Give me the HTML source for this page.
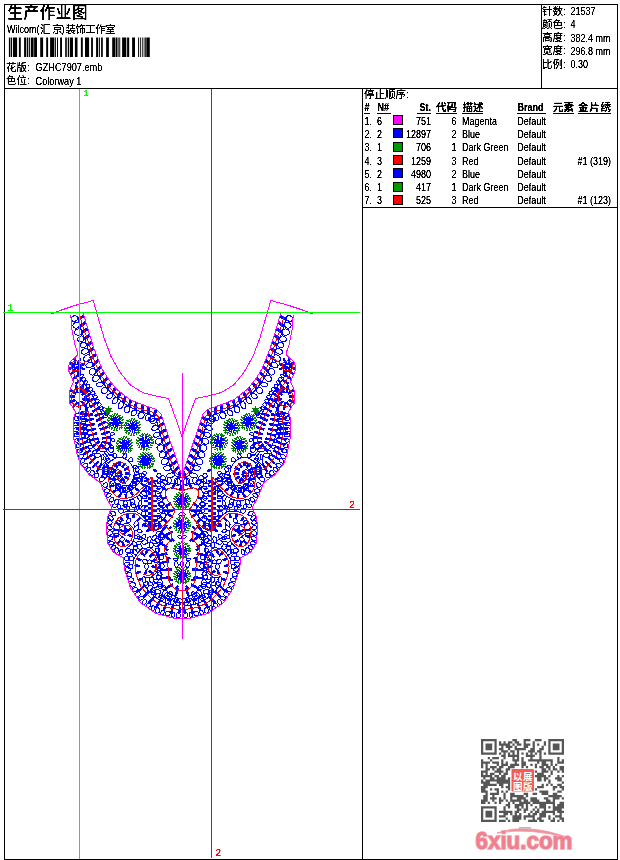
<!DOCTYPE html>
<html lang="zh"><head><meta charset="utf-8"><title>生产作业图</title>
<style>
html,body{margin:0;padding:0;background:#fff}
body{width:620px;height:860px;overflow:hidden}
svg{display:block}
text{font-family:"Liberation Sans","Noto Sans CJK SC",sans-serif;fill:#000}
.l{font-size:10px}
.c{font-size:10.5px;font-family:"Liberation Sans","Noto Sans CJK SC",sans-serif}
.hb{font-size:10px;font-weight:bold}
.hc{font-size:10.5px;font-weight:bold;font-family:"Liberation Sans","Noto Sans CJK SC",sans-serif}
.t{font-size:15.5px;font-weight:500;letter-spacing:0.6px;font-family:"Liberation Sans","Noto Sans CJK SC",sans-serif}
.g{font-size:10px;font-family:"Liberation Mono",monospace}
</style></head><body>
<svg width="620" height="860" viewBox="0 0 620 860">
<defs><filter id="th" x="0" y="0" width="100%" height="100%" filterUnits="userSpaceOnUse" color-interpolation-filters="sRGB"><feComponentTransfer><feFuncA type="linear" slope="3" intercept="-0.55"/></feComponentTransfer></filter></defs>
<rect width="620" height="860" fill="#fff"/>
<g shape-rendering="crispEdges" fill="none" stroke="#000" stroke-width="1">
<rect x="4.5" y="4.5" width="613" height="855"/>
<path d="M4 88.5H618 M362.5 88V859 M541.5 4V88 M362 207.5H618"/>
</g>
<path d="M8.9 37.5h1.5v19.5h-1.5zM11.0 37.5h1.1v19.5h-1.1zM13.0 37.5h4.1v19.5h-4.1zM18.9 37.5h1.9v19.5h-1.9zM24.1 37.5h2.0v19.5h-2.0zM26.8 37.5h1.5v19.5h-1.5zM29.1 37.5h1.1v19.5h-1.1zM31.0 37.5h2.6v19.5h-2.6zM34.1 37.5h2.9v19.5h-2.9zM40.2 37.5h2.9v19.5h-2.9zM46.2 37.5h1.9v19.5h-1.9zM50.1 37.5h4.3v19.5h-4.3zM55.1 37.5h0.9v19.5h-0.9zM57.0 37.5h1.0v19.5h-1.0zM60.1 37.5h1.9v19.5h-1.9zM65.2 37.5h1.6v19.5h-1.6zM67.8 37.5h1.3v19.5h-1.3zM69.9 37.5h3.1v19.5h-3.1zM74.9 37.5h2.6v19.5h-2.6zM80.9 37.5h1.9v19.5h-1.9zM85.0 37.5h4.1v19.5h-4.1zM91.1 37.5h1.8v19.5h-1.8zM96.1 37.5h1.9v19.5h-1.9zM98.8 37.5h1.1v19.5h-1.1zM101.1 37.5h1.7v19.5h-1.7zM106.1 37.5h2.8v19.5h-2.8zM112.2 37.5h3.2v19.5h-3.2zM115.9 37.5h1.3v19.5h-1.3zM117.7 37.5h0.9v19.5h-0.9zM119.3 37.5h0.9v19.5h-0.9zM122.1 37.5h4.2v19.5h-4.2zM127.1 37.5h2.1v19.5h-2.1zM132.1 37.5h2.9v19.5h-2.9zM138.1 37.5h0.9v19.5h-0.9zM139.9 37.5h0.9v19.5h-0.9zM141.9 37.5h0.8v19.5h-0.8zM143.7 37.5h0.8v19.5h-0.8zM145.0 37.5h0.8v19.5h-0.8zM146.3 37.5h3.5v19.5h-3.5z" fill="#000"/>
<g filter="url(#th)">
<text class="t" x="7.5" y="18">生产作业图</text>
<text class="l" transform="translate(7 33) scale(0.9 1)">Wilcom(</text>
<text class="c" x="40" y="32.5">汇</text><text class="c" x="52" y="32.5">京</text>
<text class="l" transform="translate(61.5 33) scale(0.9 1)">)</text>
<text class="c" x="65.5" y="32.5" textLength="50">装饰工作室</text>
<text class="c" x="6" y="70.5">花版:</text>
<text class="l" transform="translate(35.5 71) scale(0.92 1)">GZHC7907.emb</text>
<text class="c" x="6" y="84">色位:</text>
<text class="l" transform="translate(35.5 84.5) scale(0.92 1)">Colorway 1</text>
<text class="c" x="542.0" y="14.5" >针数:</text>
<text class="l" transform="translate(570.5 15.0) scale(0.90 1)" text-anchor="start">21537</text>
<text class="c" x="542.0" y="27.8" >颜色:</text>
<text class="l" transform="translate(570.5 28.2) scale(0.90 1)" text-anchor="start">4</text>
<text class="c" x="542.0" y="41.0" >高度:</text>
<text class="l" transform="translate(570.5 41.5) scale(0.90 1)" text-anchor="start">382.4 mm</text>
<text class="c" x="542.0" y="54.2" >宽度:</text>
<text class="l" transform="translate(570.5 54.8) scale(0.90 1)" text-anchor="start">296.8 mm</text>
<text class="c" x="542.0" y="67.5" >比例:</text>
<text class="l" transform="translate(570.5 68.0) scale(0.90 1)" text-anchor="start">0.30</text>
<text class="c" x="364" y="98">停止顺序:</text>
<g>
<text class="hb" transform="translate(364.5 110.8) scale(0.9 1)">#</text>
<text class="hb" transform="translate(377.5 110.8) scale(0.9 1)">N#</text>
<text class="hb" transform="translate(431 110.8) scale(0.9 1)" text-anchor="end">St.</text>
<text class="hc" x="436" y="110.5">代码</text>
<text class="hc" x="462.5" y="110.5">描述</text>
<text class="hb" transform="translate(517.5 110.8) scale(0.9 1)">Brand</text>
<text class="hc" x="553" y="110.5">元素</text>
<text class="hc" x="578" y="110.5" textLength="33">金片绣</text>
<path d="M364 113.5h6 M377 113.5h14 M417 113.5h14 M436 113.5h21 M462 113.5h21 M517 113.5h29 M553 113.5h21 M578 113.5h33" stroke="#000" stroke-width="1" shape-rendering="crispEdges"/>
</g>
<text class="l" transform="translate(364.5 124.8) scale(0.90 1)" text-anchor="start">1.</text>
<text class="l" transform="translate(377.0 124.8) scale(0.90 1)" text-anchor="start">6</text>
<rect x="393.5" y="115.5" width="9" height="9" fill="#f0f" stroke="#000" stroke-width="1"/>
<text class="l" transform="translate(431.0 124.8) scale(0.90 1)" text-anchor="end">751</text>
<text class="l" transform="translate(456.5 124.8) scale(0.90 1)" text-anchor="end">6</text>
<text class="l" transform="translate(462.0 124.8) scale(0.90 1)" text-anchor="start">Magenta</text>
<text class="l" transform="translate(517.2 124.8) scale(0.90 1)" text-anchor="start">Default</text>
<text class="l" transform="translate(364.5 138.0) scale(0.90 1)" text-anchor="start">2.</text>
<text class="l" transform="translate(377.0 138.0) scale(0.90 1)" text-anchor="start">2</text>
<rect x="393.5" y="128.5" width="9" height="9" fill="#00f" stroke="#000" stroke-width="1"/>
<text class="l" transform="translate(431.0 138.0) scale(0.90 1)" text-anchor="end">12897</text>
<text class="l" transform="translate(456.5 138.0) scale(0.90 1)" text-anchor="end">2</text>
<text class="l" transform="translate(462.0 138.0) scale(0.90 1)" text-anchor="start">Blue</text>
<text class="l" transform="translate(517.2 138.0) scale(0.90 1)" text-anchor="start">Default</text>
<text class="l" transform="translate(364.5 151.2) scale(0.90 1)" text-anchor="start">3.</text>
<text class="l" transform="translate(377.0 151.2) scale(0.90 1)" text-anchor="start">1</text>
<rect x="393.5" y="142.5" width="9" height="9" fill="#009900" stroke="#000" stroke-width="1"/>
<text class="l" transform="translate(431.0 151.2) scale(0.90 1)" text-anchor="end">706</text>
<text class="l" transform="translate(456.5 151.2) scale(0.90 1)" text-anchor="end">1</text>
<text class="l" transform="translate(462.0 151.2) scale(0.90 1)" text-anchor="start">Dark Green</text>
<text class="l" transform="translate(517.2 151.2) scale(0.90 1)" text-anchor="start">Default</text>
<text class="l" transform="translate(364.5 164.5) scale(0.90 1)" text-anchor="start">4.</text>
<text class="l" transform="translate(377.0 164.5) scale(0.90 1)" text-anchor="start">3</text>
<rect x="393.5" y="155.5" width="9" height="9" fill="#f00" stroke="#000" stroke-width="1"/>
<text class="l" transform="translate(431.0 164.5) scale(0.90 1)" text-anchor="end">1259</text>
<text class="l" transform="translate(456.5 164.5) scale(0.90 1)" text-anchor="end">3</text>
<text class="l" transform="translate(462.0 164.5) scale(0.90 1)" text-anchor="start">Red</text>
<text class="l" transform="translate(517.2 164.5) scale(0.90 1)" text-anchor="start">Default</text>
<text class="l" transform="translate(611.0 164.5) scale(0.90 1)" text-anchor="end">#1 (319)</text>
<text class="l" transform="translate(364.5 177.7) scale(0.90 1)" text-anchor="start">5.</text>
<text class="l" transform="translate(377.0 177.7) scale(0.90 1)" text-anchor="start">2</text>
<rect x="393.5" y="168.5" width="9" height="9" fill="#00f" stroke="#000" stroke-width="1"/>
<text class="l" transform="translate(431.0 177.7) scale(0.90 1)" text-anchor="end">4980</text>
<text class="l" transform="translate(456.5 177.7) scale(0.90 1)" text-anchor="end">2</text>
<text class="l" transform="translate(462.0 177.7) scale(0.90 1)" text-anchor="start">Blue</text>
<text class="l" transform="translate(517.2 177.7) scale(0.90 1)" text-anchor="start">Default</text>
<text class="l" transform="translate(364.5 190.9) scale(0.90 1)" text-anchor="start">6.</text>
<text class="l" transform="translate(377.0 190.9) scale(0.90 1)" text-anchor="start">1</text>
<rect x="393.5" y="182.5" width="9" height="9" fill="#009900" stroke="#000" stroke-width="1"/>
<text class="l" transform="translate(431.0 190.9) scale(0.90 1)" text-anchor="end">417</text>
<text class="l" transform="translate(456.5 190.9) scale(0.90 1)" text-anchor="end">1</text>
<text class="l" transform="translate(462.0 190.9) scale(0.90 1)" text-anchor="start">Dark Green</text>
<text class="l" transform="translate(517.2 190.9) scale(0.90 1)" text-anchor="start">Default</text>
<text class="l" transform="translate(364.5 204.1) scale(0.90 1)" text-anchor="start">7.</text>
<text class="l" transform="translate(377.0 204.1) scale(0.90 1)" text-anchor="start">3</text>
<rect x="393.5" y="195.5" width="9" height="9" fill="#f00" stroke="#000" stroke-width="1"/>
<text class="l" transform="translate(431.0 204.1) scale(0.90 1)" text-anchor="end">525</text>
<text class="l" transform="translate(456.5 204.1) scale(0.90 1)" text-anchor="end">3</text>
<text class="l" transform="translate(462.0 204.1) scale(0.90 1)" text-anchor="start">Red</text>
<text class="l" transform="translate(517.2 204.1) scale(0.90 1)" text-anchor="start">Default</text>
<text class="l" transform="translate(611.0 204.1) scale(0.90 1)" text-anchor="end">#1 (123)</text>
</g>
<g id="design" shape-rendering="crispEdges">
<g id="half">
<clipPath id="sil"><path d="M70.7 314.6 L72.0 330.0 L75.0 345.0 L77.5 352.0 L77.0 355.6 L69.6 362.4 L68.5 367.0 L69.0 371.4 L73.5 381.6 L69.6 390.6 L69.0 397.0 L69.6 403.0 L72.4 406.8 L75.8 412.4 L73.5 418.0 L73.5 437.0 L77.0 454.0 L80.2 463.5 L89.2 474.8 L100.5 482.7 L105.0 495.1 L111.8 507.6 L107.6 517.0 L106.3 528.0 L107.9 543.4 L113.5 552.4 L123.1 557.5 L124.5 569.0 L130.5 588.0 L140.8 603.0 L156.3 613.5 L173.0 618.0 L182.0 618.5 L182.0 474.3 L181.5 474.3 L165.0 426.0 L161.0 414.0 L156.6 409.5 L142.0 404.5 L129.7 399.5 L116.6 389.3 L109.0 380.0 L102.0 369.0 L94.0 348.7 L91.2 340.0 L87.0 326.0 L83.1 313.0Z"/></clipPath>
<g clip-path="url(#sil)">
<path d="M75.2 321.2 L72.9 321.3 L71.3 320.4 L70.8 318.7 L71.8 317.0 L73.8 315.9 L76.0 315.8 L77.7 316.8 L78.2 318.4 L77.2 320.1Z M77.8 317.7 L79.7 317.1 M77.6 327.8 L75.4 328.3 L73.6 327.5 L72.8 325.9 L73.4 324.1 L75.1 322.6 L77.2 322.2 L79.0 322.9 L79.8 324.5 L79.3 326.4Z M79.6 324.3 L81.5 323.8 M78.6 335.4 L76.2 334.9 L74.6 333.4 L74.5 331.4 L75.9 329.7 L78.2 328.9 L80.6 329.4 L82.2 330.9 L82.3 332.9 L80.9 334.6Z M81.6 331.1 L83.5 330.4 M82.6 341.3 L80.6 342.0 L78.7 341.5 L77.7 340.0 L77.9 338.1 L79.3 336.5 L81.3 335.8 L83.2 336.3 L84.2 337.8 L84.0 339.7Z M84.1 337.6 L86.0 336.9 M83.4 347.5 L81.4 347.2 L80.1 346.1 L80.0 344.5 L81.0 343.2 L82.9 342.5 L84.9 342.8 L86.2 343.9 L86.3 345.5 L85.3 346.8Z M86.4 344.0 L88.3 343.3 M85.9 353.9 L83.6 354.2 L81.8 353.5 L81.2 352.0 L82.1 350.3 L84.1 349.0 L86.4 348.6 L88.2 349.3 L88.8 350.8 L87.9 352.6Z M88.3 350.5 L90.2 350.0 M89.2 360.7 L87.1 361.8 L85.0 361.5 L83.6 360.1 L83.7 357.9 L85.0 355.9 L87.1 354.8 L89.3 355.1 L90.6 356.6 L90.6 358.7Z M90.3 357.2 L92.2 356.6 M90.5 367.3 L88.2 367.8 L86.3 367.2 L85.8 365.8 L86.6 364.2 L88.6 362.8 L91.0 362.3 L92.8 362.9 L93.4 364.3 L92.5 366.0Z M92.7 363.8 L94.6 363.1 M94.7 374.0 L92.8 375.1 L90.8 374.9 L89.4 373.5 L89.1 371.4 L90.2 369.5 L92.1 368.4 L94.2 368.7 L95.6 370.1 L95.8 372.1Z M95.5 370.3 L97.3 369.5 M97.8 380.5 L95.8 381.5 L93.8 381.4 L92.6 380.0 L92.7 378.0 L94.1 376.1 L96.2 375.1 L98.2 375.2 L99.4 376.5 L99.2 378.6Z M98.9 376.6 L100.6 375.6 M100.4 386.7 L98.2 386.8 L96.7 385.9 L96.4 384.5 L97.4 383.1 L99.3 382.3 L101.4 382.2 L102.9 383.1 L103.3 384.4 L102.3 385.9Z M102.7 382.6 L104.3 381.5 M106.7 392.4 L105.1 393.5 L103.2 393.6 L101.7 392.4 L101.3 390.6 L102.0 388.7 L103.7 387.5 L105.6 387.5 L107.1 388.6 L107.5 390.5Z M107.0 388.3 L108.5 387.0 M111.1 397.9 L109.3 398.6 L107.6 398.4 L106.8 397.2 L107.2 395.6 L108.5 394.1 L110.3 393.4 L112.0 393.6 L112.8 394.8 L112.5 396.4Z M112.1 393.5 L113.4 392.0 M117.1 402.1 L115.4 403.5 L113.6 403.9 L112.4 403.0 L112.3 401.2 L113.3 399.2 L115.0 397.7 L116.8 397.4 L117.9 398.3 L118.0 400.1Z M117.4 398.0 L118.7 396.5 M123.0 406.0 L121.8 407.9 L120.2 408.8 L118.8 408.3 L118.1 406.6 L118.5 404.3 L119.7 402.3 L121.4 401.4 L122.7 402.0 L123.4 403.7Z M122.8 402.4 L124.0 400.8 M129.7 410.7 L128.3 412.2 L126.5 412.7 L124.9 411.9 L124.1 410.2 L124.5 408.2 L125.9 406.7 L127.7 406.2 L129.3 407.0 L130.0 408.7Z M128.8 406.5 L129.8 404.8 M135.6 414.6 L133.9 415.7 L132.1 415.7 L131.1 414.7 L131.1 412.9 L132.2 411.2 L133.9 410.1 L135.7 410.0 L136.8 411.1 L136.7 412.8Z M135.2 409.8 L136.0 407.9 M143.6 417.1 L142.0 418.5 L140.1 418.7 L138.5 417.7 L137.9 415.8 L138.6 413.8 L140.2 412.4 L142.2 412.2 L143.7 413.2 L144.3 415.1Z M142.1 412.2 L142.6 410.3 M150.2 418.4 L148.8 420.0 L147.1 420.5 L145.8 419.8 L145.4 418.1 L146.0 416.0 L147.4 414.4 L149.1 413.9 L150.4 414.6 L150.8 416.3Z M148.9 413.9 L149.3 412.0 M153.1 421.4 L151.1 421.9 L149.4 421.2 L148.5 419.6 L148.9 417.8 L150.4 416.4 L152.3 415.9 L154.1 416.6 L154.9 418.2 L154.6 420.0Z M153.9 416.3 L155.1 414.7 M153.4 423.6 L151.4 423.1 L150.1 422.0 L150.0 420.5 L151.3 419.2 L153.3 418.7 L155.3 419.1 L156.6 420.3 L156.6 421.8 L155.4 423.0Z M156.6 420.3 L158.6 419.8 M156.4 430.0 L154.5 430.7 L152.7 430.4 L151.8 429.1 L152.2 427.3 L153.6 425.8 L155.6 425.0 L157.3 425.4 L158.2 426.7 L157.9 428.4Z M158.3 427.0 L160.3 426.5 M157.9 436.7 L155.7 437.3 L154.0 436.9 L153.3 435.6 L154.0 434.0 L155.8 432.6 L157.9 432.0 L159.7 432.4 L160.3 433.7 L159.6 435.3Z M160.1 433.7 L162.0 433.2 M159.5 444.0 L157.3 444.1 L155.7 443.2 L155.2 441.5 L156.0 439.8 L157.8 438.6 L159.9 438.5 L161.6 439.5 L162.1 441.1 L161.3 442.9Z M161.9 440.4 L163.8 439.9 M161.2 451.1 L159.0 451.0 L157.4 449.7 L156.9 447.8 L157.9 446.0 L159.8 444.9 L162.1 445.0 L163.7 446.3 L164.1 448.2 L163.2 450.1Z M163.8 447.1 L165.7 446.5 M164.3 457.4 L162.3 458.0 L160.5 457.4 L159.4 455.8 L159.6 453.8 L160.9 452.2 L162.9 451.6 L164.7 452.2 L165.8 453.8 L165.6 455.8Z M165.8 453.8 L167.7 453.1 M166.5 464.2 L164.2 464.9 L162.1 464.3 L161.1 462.6 L161.6 460.5 L163.2 458.8 L165.5 458.1 L167.5 458.7 L168.5 460.4 L168.1 462.5Z M168.1 460.4 L169.9 459.7 M167.3 470.5 L165.0 470.1 L163.6 468.9 L163.6 467.4 L165.0 466.2 L167.2 465.7 L169.5 466.1 L170.9 467.3 L170.9 468.8 L169.5 470.0Z M170.4 466.9 L172.3 466.2 M171.1 477.7 L168.7 477.9 L167.0 477.0 L166.6 475.6 L167.7 474.1 L169.9 473.1 L172.3 472.9 L174.1 473.8 L174.4 475.2 L173.3 476.7Z M173.4 473.6 L175.1 472.6 M180.7 482.6 L179.8 484.6 L178.2 485.7 L176.5 485.4 L175.3 483.8 L175.1 481.7 L176.0 479.7 L177.6 478.6 L179.4 478.9 L180.5 480.4Z M179.5 479.1 L180.4 477.4 M77.8 317.7 L79.6 324.3 L81.6 331.1 L84.1 337.6 L86.4 344.0 L88.3 350.5 L90.3 357.2 L92.7 363.8 L95.5 370.3 L98.9 376.6 L102.7 382.6 L107.0 388.3 L112.1 393.5 L117.4 398.0 L122.8 402.4 L128.8 406.5 L135.2 409.8 L142.1 412.2 L148.9 413.9 L153.9 416.3 L156.6 420.3 L158.3 427.0 L160.1 433.7 L161.9 440.4 L163.8 447.1 L165.8 453.8 L168.1 460.4 L170.4 466.9 L173.4 473.6 L179.5 479.1 M77.9 370.3 L76.6 370.4 L75.6 369.8 L75.2 368.8 L75.6 367.7 L76.6 366.9 L77.9 366.8 L78.9 367.3 L79.3 368.4 L78.9 369.5Z M80.6 373.2 L79.7 373.9 L78.6 373.9 L77.9 373.3 L77.7 372.3 L78.1 371.3 L79.1 370.6 L80.1 370.6 L80.9 371.2 L81.0 372.2Z M81.9 377.0 L80.6 377.2 L79.6 377.0 L79.3 376.2 L79.9 375.4 L81.0 374.7 L82.3 374.4 L83.3 374.7 L83.6 375.4 L83.0 376.3Z M84.3 380.9 L83.2 381.1 L82.2 380.6 L81.8 379.6 L82.0 378.5 L82.8 377.7 L83.9 377.5 L84.9 378.1 L85.4 379.1 L85.2 380.1Z M86.8 383.6 L85.6 384.3 L84.6 384.3 L83.9 383.6 L84.0 382.5 L84.7 381.5 L85.8 380.8 L86.9 380.8 L87.5 381.5 L87.5 382.6Z M89.1 387.4 L88.0 387.8 L87.0 387.4 L86.4 386.4 L86.4 385.3 L87.1 384.4 L88.2 384.1 L89.3 384.5 L89.9 385.4 L89.8 386.6Z M91.3 391.0 L89.9 391.2 L88.9 390.8 L88.5 389.8 L88.9 388.8 L89.9 388.0 L91.3 387.7 L92.3 388.2 L92.8 389.1 L92.3 390.2Z M93.4 394.9 L92.0 394.9 L91.1 394.2 L90.9 393.2 L91.5 392.3 L92.7 391.7 L94.0 391.7 L94.9 392.4 L95.2 393.3 L94.6 394.3Z M95.5 398.5 L94.2 398.5 L93.3 397.9 L93.1 397.0 L93.8 396.2 L94.9 395.7 L96.2 395.7 L97.1 396.3 L97.3 397.2 L96.7 398.0Z M97.7 402.5 L96.5 402.5 L95.5 401.9 L95.3 400.8 L95.7 399.8 L96.8 399.2 L98.0 399.2 L98.9 399.8 L99.2 400.9 L98.7 401.9Z M99.9 406.2 L98.6 406.3 L97.6 405.8 L97.2 404.8 L97.6 403.8 L98.6 403.0 L99.9 402.8 L100.9 403.4 L101.3 404.3 L100.9 405.4Z M101.8 409.7 L100.5 409.9 L99.6 409.5 L99.2 408.7 L99.6 407.7 L100.7 407.0 L101.9 406.8 L102.9 407.2 L103.2 408.0 L102.8 409.0Z M103.3 413.4 L102.0 413.2 L101.2 412.7 L101.1 411.9 L101.8 411.2 L103.0 410.8 L104.3 411.0 L105.1 411.5 L105.2 412.3 L104.5 413.0Z M75.6 369.6 L77.7 373.2 L79.8 376.8 L82.0 380.3 L84.2 383.6 L86.6 387.0 L89.0 390.5 L91.4 394.3 L93.5 398.0 L95.6 401.7 L97.6 405.5 L99.5 409.2 L101.5 413.0 M106.8 417.0 L105.5 417.4 L104.3 417.2 L103.7 416.3 L104.0 415.2 L105.0 414.2 L106.4 413.7 L107.5 413.9 L108.1 414.8 L107.8 416.0Z M112.4 435.2 L111.1 435.1 L110.3 434.5 L110.3 433.7 L111.0 433.0 L112.2 432.6 L113.4 432.8 L114.2 433.4 L114.2 434.2 L113.5 434.9Z M112.5 441.4 L111.5 440.7 L111.0 439.8 L111.3 439.0 L112.3 438.5 L113.5 438.7 L114.5 439.4 L114.9 440.3 L114.6 441.1 L113.7 441.5Z M110.5 448.1 L109.7 447.0 L109.7 445.9 L110.4 445.1 L111.5 445.0 L112.7 445.5 L113.4 446.6 L113.4 447.7 L112.8 448.5 L111.6 448.7Z M105.8 454.6 L105.0 453.5 L104.8 452.4 L105.5 451.7 L106.6 451.7 L107.7 452.3 L108.5 453.4 L108.6 454.5 L108.0 455.2 L106.9 455.2Z M94.0 450.7 L95.3 450.2 L96.4 450.4 L96.9 451.3 L96.6 452.4 L95.6 453.3 L94.3 453.8 L93.2 453.5 L92.7 452.7 L93.0 451.6Z M89.7 445.5 L90.9 445.2 L92.0 445.6 L92.6 446.6 L92.4 447.8 L91.5 448.7 L90.2 449.0 L89.1 448.6 L88.6 447.6 L88.8 446.5Z M87.4 440.0 L88.6 439.9 L89.5 440.4 L89.8 441.3 L89.4 442.2 L88.4 442.8 L87.2 442.9 L86.3 442.5 L86.0 441.6 L86.4 440.7Z M86.3 434.7 L87.7 435.0 L88.6 435.8 L88.7 436.9 L87.9 437.9 L86.6 438.3 L85.2 438.1 L84.3 437.2 L84.2 436.1 L85.0 435.2Z M84.5 430.2 L85.7 429.9 L86.8 430.4 L87.4 431.5 L87.1 432.6 L86.2 433.5 L85.0 433.7 L83.9 433.2 L83.4 432.2 L83.6 431.0Z M83.7 425.9 L84.9 425.7 L85.9 426.1 L86.4 427.0 L86.0 428.0 L85.1 428.8 L83.9 429.0 L82.9 428.6 L82.4 427.7 L82.8 426.7Z M83.1 421.1 L84.5 421.2 L85.4 421.8 L85.6 422.7 L85.0 423.6 L83.7 424.2 L82.4 424.1 L81.5 423.5 L81.3 422.6 L81.9 421.7Z M83.0 416.5 L84.2 417.1 L84.9 418.0 L84.7 418.9 L83.7 419.4 L82.3 419.4 L81.0 418.8 L80.4 417.8 L80.6 417.0 L81.6 416.4Z M81.2 412.0 L82.3 411.7 L83.3 412.0 L83.8 412.8 L83.6 413.9 L82.7 414.7 L81.6 415.0 L80.6 414.7 L80.1 413.8 L80.3 412.8Z M110.3 434.3 L111.0 440.0 L109.7 446.0 L105.6 451.8 L96.1 450.5 L92.2 446.0 L89.8 440.8 L88.4 436.0 L87.3 431.4 L86.4 426.9 L85.4 422.3 L84.6 417.6 L83.9 413.0 M86.1 404.6 L87.0 403.4 L88.2 402.8 L89.3 403.3 L89.9 404.5 L89.7 406.0 L88.8 407.3 L87.6 407.8 L86.5 407.4 L85.9 406.2Z M106.8 475.3 L106.8 476.9 L106.0 478.1 L104.7 478.4 L103.4 477.8 L102.6 476.4 L102.6 474.9 L103.4 473.7 L104.7 473.3 L106.0 474.0Z M111.2 474.8 L111.4 476.1 L111.0 477.3 L109.9 477.7 L108.8 477.4 L107.9 476.3 L107.6 474.9 L108.1 473.8 L109.1 473.3 L110.3 473.7Z M104.6 473.6 L109.5 473.2 M106.6 463.5 L107.0 464.7 L106.6 465.9 L105.6 466.6 L104.3 466.6 L103.3 465.7 L102.9 464.5 L103.3 463.3 L104.3 462.6 L105.6 462.6Z M109.4 458.9 L110.1 459.9 L110.2 461.2 L109.4 462.1 L108.2 462.4 L107.0 461.9 L106.2 460.8 L106.2 459.6 L106.9 458.6 L108.1 458.4Z M116.5 454.8 L116.9 456.3 L116.5 457.6 L115.5 458.1 L114.2 457.7 L113.2 456.5 L112.9 454.9 L113.3 453.7 L114.3 453.2 L115.5 453.6Z M126.3 457.1 L125.1 458.1 L123.9 458.3 L123.0 457.6 L122.8 456.3 L123.5 454.9 L124.7 453.9 L126.0 453.7 L126.9 454.4 L127.0 455.7Z M132.1 461.4 L130.8 462.0 L129.4 461.8 L128.6 460.8 L128.6 459.5 L129.4 458.3 L130.7 457.7 L132.0 457.9 L132.8 458.8 L132.8 460.2Z M135.3 468.5 L133.9 468.3 L132.9 467.5 L132.9 466.6 L133.7 465.7 L135.2 465.4 L136.6 465.6 L137.6 466.3 L137.6 467.3 L136.8 468.1Z M137.0 475.0 L135.5 475.1 L134.4 474.5 L134.0 473.4 L134.6 472.2 L135.9 471.4 L137.4 471.4 L138.5 472.0 L138.9 473.1 L138.3 474.2Z M133.1 482.9 L132.4 481.5 L132.5 480.1 L133.5 479.3 L134.9 479.4 L136.2 480.3 L136.9 481.7 L136.7 483.1 L135.8 483.9 L134.4 483.9Z M129.8 488.5 L128.8 487.4 L128.6 486.1 L129.2 485.2 L130.4 485.0 L131.9 485.6 L132.9 486.7 L133.1 487.9 L132.5 488.8 L131.3 489.1Z M115.6 487.0 L116.6 485.9 L118.0 485.6 L119.1 486.2 L119.5 487.5 L119.1 489.0 L118.0 490.1 L116.7 490.5 L115.6 489.8 L115.2 488.5Z M111.5 481.2 L112.9 480.8 L114.0 481.0 L114.4 481.8 L114.0 482.9 L113.0 483.8 L111.6 484.2 L110.5 484.0 L110.1 483.2 L110.5 482.1Z M110.0 471.1 L111.5 471.2 L112.5 472.0 L112.7 473.2 L112.1 474.3 L110.8 474.9 L109.4 474.8 L108.3 474.0 L108.1 472.9 L108.7 471.7Z M118.0 464.3 L118.1 465.6 L117.5 466.7 L116.4 467.2 L115.2 466.8 L114.3 465.8 L114.2 464.5 L114.8 463.4 L115.9 463.0 L117.1 463.3Z M106.7 465.9 L109.9 461.8 L115.7 457.7 L124.0 458.0 L129.2 461.5 L133.2 467.6 L134.3 473.4 L132.7 480.6 L129.2 485.5 L118.6 486.3 L114.1 481.4 L112.6 473.4 L117.4 466.8 M105.3 471.7 L103.4 471.7 L102.1 470.8 L101.9 469.6 L102.9 468.4 L104.6 467.7 L106.4 467.7 L107.7 468.6 L107.9 469.8 L107.0 471.0Z M104.2 478.0 L102.5 477.8 L101.4 476.9 L101.3 475.8 L102.3 474.8 L103.9 474.3 L105.6 474.5 L106.6 475.4 L106.7 476.5 L105.8 477.5Z M107.5 470.1 L106.6 476.4 M118.6 502.9 L117.4 504.2 L115.9 504.6 L114.7 504.0 L114.2 502.5 L114.6 500.8 L115.8 499.5 L117.3 499.1 L118.5 499.8 L119.0 501.2Z M127.7 503.0 L127.7 504.7 L126.8 506.0 L125.4 506.4 L124.0 505.7 L123.1 504.2 L123.1 502.5 L124.0 501.2 L125.4 500.8 L126.8 501.5Z M134.7 501.8 L134.4 503.6 L133.4 504.8 L132.2 504.8 L131.2 503.8 L130.7 502.0 L131.0 500.2 L131.9 499.1 L133.2 499.0 L134.2 500.1Z M141.4 497.1 L141.8 498.9 L141.3 500.3 L140.3 500.7 L139.0 500.0 L138.0 498.5 L137.6 496.8 L138.1 495.4 L139.1 494.9 L140.4 495.6Z M145.1 491.6 L146.3 492.8 L146.7 494.2 L146.0 495.3 L144.5 495.7 L142.9 495.1 L141.7 493.9 L141.4 492.5 L142.1 491.4 L143.5 491.0Z M150.1 487.2 L151.0 488.7 L150.9 490.1 L149.9 491.0 L148.5 491.0 L147.1 490.1 L146.2 488.6 L146.3 487.2 L147.2 486.3 L148.7 486.3Z M153.8 482.2 L155.0 483.5 L155.4 484.9 L154.8 485.7 L153.3 485.7 L151.7 484.9 L150.5 483.5 L150.1 482.1 L150.7 481.3 L152.2 481.3Z M117.8 499.6 L125.1 501.0 L131.7 499.5 L137.9 495.9 L142.2 491.5 L146.6 486.9 L150.7 481.9 M117.8 473.8 L116.2 473.1 L115.3 471.8 L115.6 470.6 L116.9 469.9 L118.7 469.9 L120.3 470.6 L121.2 471.8 L120.9 473.0 L119.6 473.8Z M118.0 479.4 L116.2 479.5 L114.9 478.7 L114.6 477.5 L115.4 476.2 L116.9 475.4 L118.7 475.4 L120.0 476.1 L120.3 477.3 L119.5 478.6Z M117.0 484.0 L115.6 483.2 L114.9 481.9 L115.2 480.6 L116.5 479.9 L118.1 479.9 L119.6 480.7 L120.3 482.0 L119.9 483.2 L118.7 484.0Z M119.2 488.5 L117.6 488.6 L116.3 487.7 L115.8 486.3 L116.3 484.9 L117.6 483.9 L119.2 483.8 L120.5 484.7 L121.0 486.1 L120.5 487.5Z M120.7 489.5 L119.1 490.0 L117.8 489.8 L117.2 488.8 L117.7 487.5 L118.9 486.4 L120.4 485.9 L121.8 486.2 L122.3 487.1 L121.9 488.4Z M125.0 490.6 L124.0 492.0 L122.6 492.6 L121.2 492.1 L120.4 490.8 L120.4 489.1 L121.4 487.7 L122.8 487.1 L124.3 487.6 L125.1 488.9Z M125.7 490.6 L125.0 492.2 L123.9 493.0 L122.8 492.7 L122.1 491.5 L122.1 489.8 L122.9 488.2 L124.0 487.4 L125.1 487.7 L125.8 488.9Z M129.1 488.1 L130.1 489.6 L130.2 491.0 L129.4 491.8 L128.0 491.6 L126.5 490.5 L125.6 489.0 L125.5 487.6 L126.3 486.9 L127.7 487.1Z M131.8 487.0 L132.4 488.5 L132.2 489.8 L131.3 490.5 L130.0 490.2 L128.8 489.2 L128.2 487.7 L128.4 486.4 L129.4 485.7 L130.7 486.0Z M136.1 482.5 L136.8 483.9 L136.7 485.3 L135.8 486.0 L134.4 485.9 L133.1 484.9 L132.4 483.4 L132.6 482.0 L133.5 481.3 L134.9 481.4Z M139.2 478.0 L140.7 479.1 L141.3 480.3 L140.8 481.3 L139.5 481.7 L137.8 481.3 L136.3 480.2 L135.7 479.0 L136.2 478.0 L137.5 477.6Z M142.8 473.5 L144.1 474.4 L144.5 475.8 L144.0 477.0 L142.7 477.5 L141.2 477.3 L139.9 476.3 L139.4 475.0 L139.9 473.8 L141.2 473.2Z M115.7 471.4 L114.9 477.2 L115.0 482.2 L115.9 487.0 L117.9 489.8 L121.5 492.2 L124.2 492.8 L128.8 491.7 L132.1 490.0 L136.4 485.5 L140.4 481.4 L144.1 476.9 M120.7 538.1 L122.2 537.4 L123.5 537.6 L124.2 538.6 L124.1 539.9 L123.1 541.2 L121.6 541.8 L120.2 541.7 L119.5 540.7 L119.7 539.4Z M115.2 533.5 L117.0 533.0 L118.4 533.4 L118.9 534.4 L118.3 535.7 L116.8 536.8 L115.0 537.3 L113.5 536.9 L113.0 535.9 L113.7 534.6Z M120.2 521.7 L120.6 523.3 L120.2 524.5 L119.2 525.0 L118.0 524.6 L117.0 523.4 L116.6 521.9 L116.9 520.6 L117.9 520.1 L119.1 520.5Z M130.3 521.6 L129.3 522.7 L128.0 523.1 L127.0 522.6 L126.6 521.3 L127.0 519.8 L128.0 518.7 L129.3 518.3 L130.3 518.8 L130.7 520.1Z M137.6 529.7 L136.0 530.5 L134.5 530.3 L133.7 529.4 L133.9 527.9 L135.1 526.5 L136.7 525.7 L138.2 525.8 L138.9 526.8 L138.7 528.3Z M137.9 538.8 L136.1 538.8 L134.9 538.0 L134.6 536.8 L135.4 535.6 L137.0 534.9 L138.8 534.9 L140.0 535.7 L140.3 536.9 L139.5 538.1Z M133.3 545.5 L132.4 544.0 L132.5 542.6 L133.3 541.8 L134.7 542.0 L136.1 543.1 L136.9 544.6 L136.9 546.0 L136.1 546.8 L134.7 546.6Z M125.9 551.6 L125.7 550.0 L126.4 548.7 L127.8 548.1 L129.3 548.4 L130.3 549.6 L130.5 551.1 L129.8 552.5 L128.4 553.1 L126.9 552.7Z M123.3 537.5 L117.9 533.4 L120.2 524.6 L128.1 523.2 L133.9 529.0 L134.9 536.4 L132.5 543.0 L127.0 548.2 M123.0 510.0 L123.1 511.7 L122.3 513.0 L120.9 513.4 L119.5 512.8 L118.6 511.3 L118.6 509.6 L119.4 508.3 L120.7 507.9 L122.1 508.6Z M129.8 507.6 L130.1 509.1 L129.7 510.3 L128.7 510.8 L127.5 510.4 L126.5 509.2 L126.2 507.7 L126.6 506.5 L127.6 506.0 L128.8 506.4Z M138.3 509.5 L137.4 511.0 L136.2 511.6 L135.2 511.3 L134.8 510.0 L135.0 508.3 L135.9 506.9 L137.1 506.2 L138.1 506.6 L138.5 507.8Z M145.4 514.3 L144.4 515.5 L143.0 515.8 L141.8 515.1 L141.3 513.8 L141.7 512.3 L142.8 511.2 L144.2 510.9 L145.3 511.5 L145.8 512.8Z M148.7 519.7 L147.0 520.0 L145.6 519.5 L145.2 518.5 L145.9 517.2 L147.4 516.3 L149.2 516.0 L150.6 516.4 L151.0 517.5 L150.3 518.7Z M154.5 524.2 L153.4 525.2 L151.8 525.4 L150.6 524.6 L150.0 523.2 L150.4 521.7 L151.5 520.6 L153.0 520.5 L154.3 521.2 L154.9 522.6Z M157.4 529.9 L155.8 530.3 L154.3 529.6 L153.6 528.3 L154.0 526.7 L155.2 525.6 L156.9 525.3 L158.3 525.9 L159.0 527.2 L158.7 528.8Z M121.9 513.0 L128.5 511.0 L135.8 511.4 L141.8 515.2 L146.2 519.8 L150.4 524.6 L154.3 529.4 M152.3 522.3 L153.0 523.9 L152.6 525.3 L151.5 526.2 L150.0 526.0 L148.7 525.0 L148.1 523.5 L148.4 522.0 L149.5 521.2 L151.0 521.3Z M157.2 520.0 L158.2 521.4 L158.3 522.7 L157.5 523.6 L156.2 523.5 L154.7 522.7 L153.8 521.3 L153.7 519.9 L154.4 519.1 L155.8 519.1Z M161.6 518.0 L162.1 519.7 L161.7 521.3 L160.4 522.0 L158.8 521.7 L157.5 520.4 L157.0 518.7 L157.5 517.1 L158.8 516.4 L160.3 516.7Z M164.6 513.7 L165.7 515.1 L165.8 516.7 L165.0 517.9 L163.4 518.2 L161.8 517.5 L160.7 516.1 L160.6 514.5 L161.5 513.4 L163.0 513.1Z M167.9 510.5 L168.6 512.0 L168.3 513.5 L167.2 514.3 L165.8 514.1 L164.5 513.0 L163.8 511.4 L164.1 510.0 L165.2 509.2 L166.6 509.4Z M167.0 509.6 L168.5 510.2 L169.4 511.4 L169.3 512.8 L168.3 513.9 L166.7 514.3 L165.2 513.8 L164.3 512.5 L164.4 511.1 L165.4 510.0Z M164.2 507.2 L166.0 506.8 L167.5 507.4 L168.0 508.7 L167.5 510.2 L166.1 511.3 L164.3 511.6 L162.9 511.0 L162.3 509.7 L162.8 508.3Z M160.5 501.9 L162.3 501.7 L163.7 502.4 L164.0 503.6 L163.2 504.9 L161.6 505.7 L159.8 505.9 L158.5 505.2 L158.1 504.0 L158.9 502.8Z M158.3 491.8 L159.9 492.5 L160.8 493.8 L160.5 495.2 L159.3 496.1 L157.5 496.2 L155.8 495.4 L155.0 494.1 L155.2 492.8 L156.5 491.9Z M166.0 480.5 L167.0 482.0 L167.1 483.4 L166.2 484.3 L164.8 484.3 L163.3 483.4 L162.3 481.9 L162.2 480.5 L163.0 479.6 L164.5 479.6Z M178.0 480.8 L177.8 482.5 L177.0 483.6 L175.8 483.7 L174.7 482.9 L174.1 481.3 L174.3 479.6 L175.2 478.5 L176.4 478.4 L177.5 479.2Z M184.0 483.9 L183.0 485.3 L181.7 485.9 L180.6 485.4 L180.1 484.0 L180.4 482.3 L181.4 480.9 L182.8 480.4 L183.9 480.8 L184.4 482.2Z M151.5 526.1 L157.1 523.7 L161.3 521.2 L165.2 517.4 L168.4 513.1 L169.4 511.3 L167.2 507.6 L163.2 502.4 L160.5 493.9 L165.8 484.3 L175.4 483.6 L181.4 485.6 M159.7 535.7 L157.9 536.2 L156.5 535.8 L155.8 534.6 L156.2 533.1 L157.5 531.8 L159.2 531.3 L160.7 531.8 L161.4 533.0 L161.0 534.5Z M162.2 537.7 L160.6 538.2 L159.2 537.9 L158.8 536.9 L159.3 535.7 L160.7 534.6 L162.3 534.2 L163.6 534.5 L164.1 535.4 L163.6 536.6Z M162.5 537.4 L160.9 537.6 L159.7 537.0 L159.2 535.9 L159.8 534.7 L161.2 533.8 L162.9 533.6 L164.1 534.1 L164.5 535.2 L163.9 536.5Z M160.7 537.3 L159.3 536.5 L158.6 535.3 L158.9 534.2 L160.1 533.6 L161.7 533.7 L163.2 534.5 L163.8 535.7 L163.5 536.8 L162.3 537.4Z M156.5 542.1 L155.3 540.7 L154.9 539.3 L155.6 538.4 L157.1 538.3 L158.7 539.1 L160.0 540.4 L160.3 541.9 L159.6 542.8 L158.1 542.9Z M155.5 556.0 L153.7 555.9 L152.4 555.1 L152.2 553.8 L153.2 552.6 L154.9 551.9 L156.8 552.0 L158.0 552.9 L158.2 554.2 L157.3 555.4Z M156.5 562.6 L154.8 562.1 L153.8 560.9 L153.9 559.3 L154.9 558.1 L156.7 557.7 L158.3 558.2 L159.4 559.5 L159.3 561.0 L158.2 562.2Z M157.7 567.4 L156.0 567.0 L155.0 566.1 L155.1 565.0 L156.1 564.2 L157.8 563.9 L159.5 564.3 L160.5 565.3 L160.4 566.3 L159.4 567.2Z M158.8 572.2 L156.9 572.4 L155.6 571.9 L155.3 570.9 L156.1 569.7 L157.7 568.9 L159.6 568.6 L160.9 569.1 L161.2 570.1 L160.4 571.3Z M158.6 579.2 L157.1 578.9 L156.1 577.9 L156.0 576.7 L156.8 575.6 L158.3 575.1 L159.9 575.3 L160.9 576.3 L161.0 577.6 L160.1 578.7Z M160.5 588.4 L159.0 588.0 L158.0 586.9 L158.0 585.6 L158.9 584.5 L160.3 584.0 L161.8 584.4 L162.8 585.5 L162.8 586.8 L161.9 587.9Z M168.3 596.3 L166.9 597.2 L165.4 597.2 L164.5 596.3 L164.6 594.8 L165.5 593.4 L166.9 592.5 L168.4 592.5 L169.2 593.4 L169.2 594.8Z M178.2 600.8 L177.3 602.1 L176.0 602.7 L174.9 602.2 L174.3 601.0 L174.5 599.4 L175.4 598.1 L176.7 597.5 L177.8 597.9 L178.4 599.2Z M160.2 531.7 L163.5 534.6 L164.5 535.6 L163.3 537.0 L159.7 542.1 L157.8 553.4 L159.1 559.6 L160.3 565.3 L160.9 570.4 L161.1 576.9 L162.8 585.2 L168.6 592.9 L177.0 597.6 M146.0 579.6 L145.8 581.4 L144.9 582.7 L143.7 582.8 L142.5 581.8 L141.9 580.1 L142.1 578.2 L143.0 577.0 L144.2 576.8 L145.4 577.8Z M153.9 579.6 L153.6 581.5 L152.6 582.7 L151.3 582.7 L150.2 581.7 L149.7 579.9 L150.0 578.1 L150.9 576.9 L152.2 576.8 L153.3 577.9Z M160.7 571.5 L161.9 573.0 L162.1 574.5 L161.2 575.5 L159.7 575.5 L158.1 574.6 L156.9 573.1 L156.7 571.6 L157.6 570.6 L159.1 570.6Z M162.4 563.8 L163.7 564.6 L164.3 565.9 L164.0 567.2 L162.8 568.0 L161.2 568.0 L159.9 567.2 L159.3 565.9 L159.7 564.6 L160.9 563.8Z M160.3 555.9 L161.7 555.4 L163.1 555.7 L163.8 556.7 L163.6 558.1 L162.6 559.3 L161.1 559.8 L159.8 559.5 L159.1 558.5 L159.2 557.1Z M155.9 548.8 L157.3 548.1 L158.7 548.3 L159.6 549.2 L159.6 550.6 L158.7 551.9 L157.4 552.6 L156.0 552.5 L155.1 551.5 L155.1 550.1Z M149.1 544.5 L150.1 543.1 L151.4 542.5 L152.7 542.9 L153.5 544.2 L153.3 545.9 L152.4 547.3 L151.1 547.9 L149.8 547.5 L149.0 546.2Z M138.0 547.8 L137.6 546.2 L138.1 544.8 L139.2 544.2 L140.7 544.6 L141.8 545.8 L142.2 547.4 L141.7 548.8 L140.5 549.4 L139.1 549.0Z M133.1 553.3 L132.5 551.6 L132.7 550.0 L133.8 549.3 L135.3 549.7 L136.6 551.0 L137.3 552.8 L137.0 554.3 L136.0 555.0 L134.5 554.6Z M131.1 561.0 L129.6 560.5 L128.7 559.3 L128.8 557.9 L129.8 556.8 L131.3 556.5 L132.8 557.0 L133.7 558.1 L133.7 559.5 L132.7 560.6Z M129.8 569.0 L128.1 568.4 L127.1 567.1 L127.3 565.6 L128.5 564.6 L130.2 564.3 L131.9 564.9 L132.9 566.2 L132.8 567.6 L131.6 568.7Z M144.2 577.2 L151.1 577.3 L157.1 571.9 L159.3 565.4 L158.9 558.3 L155.3 552.0 L150.0 547.5 L141.6 548.8 L137.0 553.7 L133.6 559.6 L132.6 566.6 M146.6 585.1 L145.0 585.3 L143.8 584.7 L143.5 583.6 L144.1 582.5 L145.4 581.6 L147.0 581.5 L148.2 582.0 L148.6 583.1 L148.0 584.3Z M152.1 589.4 L150.8 590.7 L149.2 591.1 L147.9 590.4 L147.4 588.8 L147.9 587.1 L149.2 585.7 L150.8 585.4 L152.1 586.1 L152.6 587.6Z M155.0 593.6 L153.8 594.6 L152.5 594.7 L151.7 594.0 L151.7 592.7 L152.5 591.3 L153.7 590.4 L155.0 590.2 L155.8 590.9 L155.8 592.2Z M159.3 597.1 L158.1 598.0 L156.7 598.1 L155.6 597.3 L155.3 595.9 L155.8 594.5 L157.0 593.5 L158.5 593.4 L159.5 594.2 L159.9 595.6Z M163.6 599.6 L162.5 600.7 L161.2 600.9 L160.3 600.3 L160.2 599.0 L160.7 597.6 L161.9 596.6 L163.1 596.4 L164.0 597.0 L164.2 598.2Z M169.2 601.4 L168.4 603.0 L167.1 603.7 L165.9 603.4 L165.1 602.1 L165.1 600.4 L165.9 598.8 L167.2 598.1 L168.5 598.4 L169.3 599.7Z M174.2 602.4 L173.7 603.9 L172.6 604.8 L171.3 604.8 L170.3 603.8 L170.0 602.2 L170.5 600.7 L171.6 599.8 L172.8 599.9 L173.8 600.9Z M180.1 602.7 L180.1 604.5 L179.2 605.8 L177.9 606.1 L176.5 605.3 L175.7 603.7 L175.7 601.8 L176.6 600.5 L178.0 600.2 L179.3 601.0Z M144.0 585.1 L148.0 589.9 L151.9 594.3 L156.1 597.9 L161.0 601.0 L166.3 603.4 L171.6 604.9 L177.6 605.8 M76.6 416.5 L75.6 415.1 L75.5 413.7 L76.2 413.0 L77.6 413.1 L79.0 414.1 L80.0 415.5 L80.1 416.8 L79.4 417.6 L78.0 417.5Z M76.7 420.9 L75.3 420.4 L74.4 419.3 L74.4 418.0 L75.3 416.9 L76.8 416.5 L78.3 416.9 L79.2 418.0 L79.1 419.4 L78.2 420.5Z M76.6 425.9 L74.9 425.7 L73.8 424.9 L73.7 423.8 L74.7 422.8 L76.3 422.3 L78.0 422.5 L79.2 423.3 L79.3 424.4 L78.3 425.4Z M76.8 431.7 L75.0 431.6 L73.7 430.7 L73.5 429.4 L74.5 428.2 L76.1 427.5 L77.9 427.7 L79.2 428.5 L79.4 429.8 L78.4 431.0Z M76.1 436.9 L74.6 436.1 L73.9 434.9 L74.2 433.7 L75.5 433.0 L77.2 433.0 L78.7 433.8 L79.4 435.1 L79.1 436.3 L77.8 437.0Z M78.2 441.9 L76.7 442.3 L75.4 441.9 L74.8 440.9 L75.2 439.6 L76.3 438.5 L77.9 438.1 L79.2 438.5 L79.7 439.6 L79.4 440.9Z M79.5 447.4 L78.1 447.8 L76.7 447.3 L76.0 446.2 L76.1 444.7 L77.1 443.6 L78.5 443.2 L79.9 443.7 L80.6 444.9 L80.5 446.3Z M79.8 452.9 L78.2 452.7 L77.1 451.8 L77.0 450.5 L77.9 449.4 L79.4 448.9 L81.0 449.1 L82.1 450.0 L82.2 451.3 L81.3 452.4Z M82.0 458.0 L80.4 458.6 L79.0 458.3 L78.4 457.4 L78.7 456.0 L80.0 454.8 L81.6 454.2 L82.9 454.4 L83.6 455.4 L83.2 456.7Z M83.8 462.0 L82.5 463.0 L81.1 463.2 L80.3 462.4 L80.3 461.1 L81.2 459.6 L82.6 458.7 L83.9 458.5 L84.7 459.3 L84.7 460.6Z M86.1 466.9 L84.5 467.3 L83.1 466.9 L82.6 465.9 L83.2 464.6 L84.5 463.6 L86.2 463.2 L87.5 463.6 L88.0 464.6 L87.5 465.9Z M89.9 470.5 L88.7 471.4 L87.4 471.4 L86.6 470.7 L86.5 469.4 L87.2 468.1 L88.4 467.2 L89.7 467.2 L90.5 467.9 L90.6 469.2Z M94.1 473.7 L93.2 475.0 L91.8 475.4 L90.6 475.0 L89.9 473.7 L90.1 472.1 L91.0 470.8 L92.4 470.3 L93.6 470.8 L94.3 472.1Z M97.8 477.2 L96.3 478.0 L94.9 477.8 L94.0 476.8 L94.0 475.4 L94.9 474.0 L96.4 473.2 L97.9 473.4 L98.8 474.4 L98.7 475.8Z M103.5 480.8 L102.0 481.8 L100.4 481.8 L99.3 480.8 L99.2 479.3 L100.0 477.7 L101.5 476.7 L103.1 476.7 L104.2 477.7 L104.3 479.3Z M106.5 487.0 L105.0 487.4 L103.6 486.9 L102.9 485.7 L103.2 484.2 L104.3 483.1 L105.8 482.7 L107.1 483.2 L107.8 484.4 L107.6 485.8Z M106.9 492.7 L105.2 492.3 L104.2 491.2 L104.2 490.1 L105.3 489.1 L107.1 488.8 L108.8 489.3 L109.8 490.3 L109.8 491.5 L108.7 492.4Z M109.9 496.8 L108.4 497.4 L107.1 497.1 L106.5 496.2 L106.7 494.9 L107.8 493.8 L109.3 493.2 L110.6 493.4 L111.2 494.4 L110.9 495.6Z M112.9 501.3 L111.4 502.0 L110.1 501.8 L109.4 500.8 L109.6 499.5 L110.6 498.3 L112.1 497.7 L113.4 497.8 L114.1 498.8 L113.9 500.1Z M114.7 507.4 L113.1 507.1 L112.1 506.3 L112.1 505.2 L113.0 504.2 L114.6 503.9 L116.2 504.1 L117.3 505.0 L117.3 506.1 L116.3 507.0Z M112.3 515.2 L111.1 513.9 L110.8 512.5 L111.5 511.4 L112.9 511.2 L114.5 511.8 L115.7 513.1 L116.0 514.5 L115.3 515.6 L113.9 515.8Z M109.7 519.2 L108.6 517.9 L108.4 516.6 L109.1 515.7 L110.4 515.7 L111.9 516.5 L113.0 517.8 L113.2 519.2 L112.6 520.0 L111.2 520.0Z M109.6 524.4 L108.2 523.8 L107.5 522.8 L107.7 521.7 L108.7 520.9 L110.1 520.8 L111.5 521.3 L112.2 522.4 L112.0 523.5 L111.0 524.3Z M108.8 529.6 L107.5 528.6 L107.0 527.3 L107.4 526.2 L108.7 525.6 L110.4 525.8 L111.7 526.8 L112.2 528.1 L111.8 529.2 L110.5 529.8Z M110.6 535.0 L108.9 535.3 L107.5 534.8 L107.0 533.6 L107.5 532.2 L108.9 531.1 L110.6 530.8 L112.0 531.3 L112.5 532.5 L112.0 533.9Z M111.2 540.1 L109.6 540.6 L108.2 540.2 L107.6 539.1 L108.0 537.7 L109.3 536.5 L111.0 536.1 L112.4 536.5 L113.0 537.6 L112.5 539.0Z M111.4 544.9 L109.7 544.6 L108.6 543.8 L108.6 542.7 L109.7 541.9 L111.3 541.6 L113.0 541.9 L114.0 542.7 L114.0 543.7 L113.0 544.6Z M114.7 548.4 L113.5 549.5 L112.2 549.8 L111.4 549.1 L111.3 547.8 L112.1 546.3 L113.3 545.2 L114.6 545.0 L115.4 545.6 L115.5 546.9Z M118.5 551.3 L117.5 552.7 L116.1 553.2 L114.9 552.7 L114.3 551.3 L114.5 549.6 L115.5 548.3 L116.9 547.8 L118.2 548.3 L118.8 549.7Z M122.7 552.9 L121.7 554.3 L120.5 554.9 L119.5 554.5 L119.1 553.2 L119.4 551.5 L120.3 550.1 L121.5 549.5 L122.5 549.9 L123.0 551.2Z M127.6 560.6 L126.0 560.6 L124.8 559.8 L124.4 558.5 L125.0 557.2 L126.4 556.4 L128.0 556.3 L129.2 557.1 L129.6 558.4 L129.0 559.8Z M127.4 566.8 L125.8 566.4 L124.7 565.3 L124.6 563.8 L125.6 562.6 L127.2 562.1 L128.8 562.4 L129.9 563.6 L130.0 565.0 L129.0 566.2Z M128.1 571.3 L126.4 571.1 L125.3 570.1 L125.2 568.9 L126.2 567.8 L127.8 567.3 L129.5 567.5 L130.6 568.5 L130.7 569.7 L129.8 570.8Z M129.4 576.9 L127.8 576.5 L126.8 575.4 L126.8 573.9 L127.8 572.8 L129.3 572.3 L130.9 572.7 L131.8 573.9 L131.9 575.3 L130.9 576.5Z M131.0 582.0 L129.3 581.7 L128.2 580.7 L128.1 579.4 L129.1 578.3 L130.8 577.8 L132.5 578.1 L133.6 579.1 L133.7 580.4 L132.7 581.5Z M132.8 587.1 L131.1 586.7 L130.0 585.6 L129.9 584.2 L130.9 583.1 L132.6 582.6 L134.4 582.9 L135.5 584.0 L135.5 585.4 L134.5 586.6Z M135.7 591.5 L134.1 591.7 L132.8 591.0 L132.4 589.8 L132.9 588.5 L134.3 587.6 L135.9 587.4 L137.2 588.1 L137.6 589.3 L137.1 590.6Z M139.1 596.0 L137.6 596.6 L136.2 596.2 L135.4 595.1 L135.5 593.7 L136.5 592.4 L138.0 591.8 L139.4 592.2 L140.2 593.3 L140.1 594.7Z M141.5 600.0 L139.8 600.1 L138.5 599.6 L138.2 598.6 L139.0 597.5 L140.5 596.7 L142.2 596.5 L143.4 597.0 L143.7 598.0 L143.0 599.2Z M146.2 602.9 L145.2 604.0 L143.9 604.3 L142.9 603.8 L142.5 602.5 L142.9 601.1 L143.9 600.0 L145.2 599.6 L146.2 600.2 L146.6 601.4Z M149.7 606.8 L148.2 607.3 L146.9 607.0 L146.3 606.0 L146.5 604.7 L147.6 603.6 L149.0 603.1 L150.3 603.4 L151.0 604.4 L150.7 605.7Z M154.7 608.4 L154.0 609.8 L153.0 610.5 L152.0 610.3 L151.4 609.3 L151.4 607.7 L152.0 606.3 L153.0 605.6 L154.0 605.8 L154.7 606.8Z M159.7 610.7 L159.1 612.4 L157.9 613.3 L156.6 613.1 L155.7 611.9 L155.5 610.2 L156.1 608.6 L157.3 607.7 L158.6 607.9 L159.5 609.0Z M164.2 612.9 L163.3 614.3 L162.2 614.9 L161.2 614.5 L160.8 613.3 L161.1 611.7 L162.0 610.4 L163.1 609.8 L164.0 610.1 L164.5 611.4Z M170.1 613.4 L169.8 614.8 L168.7 615.8 L167.3 615.9 L166.0 615.2 L165.5 613.8 L165.8 612.4 L166.8 611.4 L168.3 611.3 L169.5 612.0Z M174.9 614.6 L174.6 616.1 L173.8 617.0 L172.7 617.1 L171.8 616.2 L171.4 614.7 L171.7 613.2 L172.6 612.3 L173.7 612.3 L174.6 613.2Z M180.3 614.8 L180.2 616.5 L179.4 617.7 L178.0 617.9 L176.8 617.1 L176.1 615.6 L176.2 614.0 L177.1 612.8 L178.4 612.5 L179.6 613.3Z M156.5 483.5 L160.0 483.5 M156.5 488.5 L160.0 488.5 M156.5 493.5 L160.0 493.5 M156.5 498.5 L160.0 498.5 M156.5 503.5 L160.0 503.5 M156.5 508.5 L160.0 508.5 M156.5 513.5 L160.0 513.5 M156.5 518.5 L160.0 518.5 M156.5 523.5 L160.0 523.5 M156.5 528.5 L160.0 528.5 M159.5 509.5 L160.0 507.9 L161.2 506.9 L162.4 507.0 L163.3 508.2 L163.5 509.9 L163.0 511.6 L161.9 512.6 L160.6 512.5 L159.7 511.3Z M131.8 506.7 L130.8 505.2 L130.7 503.7 L131.5 502.8 L133.0 502.9 L134.6 503.9 L135.6 505.4 L135.7 506.9 L134.9 507.8 L133.4 507.7Z M156.1 582.3 L154.6 582.1 L153.7 581.5 L153.6 580.6 L154.4 579.8 L155.7 579.3 L157.1 579.4 L158.1 580.1 L158.2 581.0 L157.4 581.8Z M145.0 538.2 L143.7 538.6 L142.5 538.3 L141.9 537.3 L142.0 536.0 L142.9 535.0 L144.2 534.6 L145.4 534.9 L146.0 535.9 L145.9 537.1Z M160.4 537.8 L160.3 536.2 L161.0 534.9 L162.3 534.5 L163.6 535.1 L164.5 536.5 L164.5 538.2 L163.8 539.4 L162.6 539.8 L161.3 539.2Z M149.7 585.7 L148.3 585.0 L147.5 583.9 L147.7 582.7 L148.9 581.9 L150.5 581.9 L152.0 582.5 L152.7 583.7 L152.5 584.9 L151.4 585.6Z M145.2 475.5 L143.7 476.5 L142.1 476.4 L141.2 475.5 L141.3 473.9 L142.3 472.4 L143.8 471.5 L145.3 471.6 L146.3 472.5 L146.2 474.0Z M163.4 590.0 L162.0 589.2 L161.4 588.0 L161.7 586.7 L162.8 585.8 L164.4 585.7 L165.7 586.5 L166.4 587.7 L166.1 589.0 L164.9 589.9Z M139.1 469.3 L138.6 471.1 L137.6 472.1 L136.4 472.0 L135.5 470.8 L135.2 469.0 L135.7 467.3 L136.8 466.3 L138.0 466.4 L138.9 467.5Z M179.0 538.3 L178.0 537.3 L177.8 536.1 L178.3 535.3 L179.5 535.2 L180.8 535.8 L181.8 536.9 L182.0 538.0 L181.5 538.8 L180.3 538.9Z M151.2 539.9 L150.5 541.6 L149.3 542.5 L148.1 542.2 L147.3 541.0 L147.2 539.2 L147.9 537.6 L149.1 536.7 L150.3 536.9 L151.1 538.2Z M159.1 586.4 L157.6 585.6 L157.0 584.3 L157.3 583.1 L158.5 582.4 L160.2 582.5 L161.7 583.3 L162.4 584.6 L162.0 585.8 L160.8 586.5Z M105.7 415.4 L104.6 414.7 L104.2 413.7 L104.5 412.8 L105.5 412.4 L106.8 412.6 L107.9 413.3 L108.3 414.3 L108.0 415.2 L106.9 415.6Z M144.6 499.0 L143.2 498.8 L142.3 497.9 L142.3 496.8 L143.1 495.9 L144.4 495.4 L145.8 495.7 L146.7 496.5 L146.8 497.7 L146.0 498.6Z M138.6 502.6 L139.2 501.2 L140.2 500.4 L141.2 500.6 L141.9 501.7 L142.0 503.2 L141.4 504.7 L140.3 505.5 L139.3 505.3 L138.6 504.2Z M138.0 524.5 L136.9 525.8 L135.5 526.3 L134.4 525.7 L133.9 524.3 L134.3 522.6 L135.4 521.3 L136.8 520.9 L137.9 521.4 L138.4 522.8Z M159.7 500.4 L158.3 500.4 L157.2 499.7 L156.9 498.5 L157.4 497.3 L158.6 496.6 L159.9 496.6 L161.0 497.3 L161.3 498.5 L160.8 499.7Z M161.1 479.2 L160.8 477.7 L161.4 476.4 L162.7 475.8 L164.1 476.1 L165.1 477.3 L165.4 478.8 L164.8 480.1 L163.6 480.8 L162.2 480.4Z M97.4 457.4 L95.5 457.0 L94.3 456.0 L94.2 454.7 L95.4 453.6 L97.3 453.2 L99.3 453.6 L100.5 454.6 L100.5 455.9 L99.3 457.0Z M178.7 602.9 L177.2 601.8 L176.7 600.3 L177.2 599.0 L178.7 598.3 L180.5 598.6 L182.0 599.7 L182.6 601.2 L182.0 602.6 L180.5 603.2Z M157.3 593.8 L155.8 592.9 L155.1 591.5 L155.6 590.2 L156.9 589.5 L158.6 589.6 L160.1 590.6 L160.8 591.9 L160.4 593.2 L159.0 593.9Z M155.7 546.3 L154.2 545.8 L153.4 544.9 L153.6 543.9 L154.6 543.2 L156.1 543.1 L157.6 543.7 L158.4 544.6 L158.2 545.6 L157.2 546.2Z M130.6 489.9 L129.0 490.1 L127.8 489.5 L127.4 488.4 L128.0 487.2 L129.3 486.3 L130.9 486.2 L132.1 486.7 L132.5 487.8 L131.9 489.0Z M150.7 589.7 L151.4 588.2 L152.7 587.4 L154.1 587.7 L155.0 588.9 L155.2 590.5 L154.5 592.0 L153.2 592.8 L151.8 592.5 L150.8 591.4Z M143.9 563.3 L142.8 562.0 L142.7 560.5 L143.5 559.4 L145.0 559.1 L146.5 559.7 L147.5 561.0 L147.7 562.5 L146.9 563.6 L145.4 563.9Z M144.4 508.8 L143.2 510.0 L141.8 510.3 L141.0 509.7 L140.9 508.3 L141.6 506.8 L142.9 505.6 L144.2 505.2 L145.1 505.9 L145.2 507.2Z M137.3 478.6 L135.9 478.4 L134.8 477.4 L134.7 476.0 L135.4 474.8 L136.8 474.2 L138.3 474.5 L139.3 475.5 L139.4 476.8 L138.7 478.0Z M117.7 507.5 L117.3 506.0 L117.6 504.8 L118.6 504.4 L119.7 504.8 L120.7 506.1 L121.0 507.6 L120.7 508.8 L119.8 509.2 L118.6 508.7Z M156.1 539.2 L154.9 540.5 L153.5 540.9 L152.3 540.2 L151.9 538.8 L152.3 537.1 L153.5 535.9 L155.0 535.5 L156.1 536.1 L156.6 537.6Z M139.3 544.3 L137.6 544.6 L136.4 544.2 L136.0 543.2 L136.8 542.1 L138.3 541.3 L140.0 541.0 L141.2 541.4 L141.6 542.4 L140.8 543.5Z M110.0 452.0 L108.6 450.7 L108.1 449.1 L108.8 447.6 L110.4 446.9 L112.2 447.2 L113.6 448.4 L114.0 450.1 L113.4 451.5 L111.8 452.3Z M167.4 594.0 L166.4 595.7 L164.9 596.5 L163.5 596.1 L162.7 594.6 L162.8 592.6 L163.8 590.8 L165.3 590.1 L166.7 590.5 L167.5 592.0Z M138.9 532.5 L137.7 531.5 L137.3 530.4 L137.8 529.5 L139.1 529.2 L140.5 529.6 L141.7 530.6 L142.1 531.8 L141.6 532.7 L140.4 533.0Z M158.5 579.3 L157.0 578.4 L156.4 577.1 L156.8 575.9 L158.1 575.2 L159.8 575.3 L161.2 576.2 L161.9 577.5 L161.5 578.8 L160.2 579.4Z M178.2 564.3 L178.1 566.2 L177.4 567.5 L176.2 567.6 L175.2 566.6 L174.6 564.8 L174.7 562.8 L175.4 561.5 L176.6 561.4 L177.6 562.4Z M160.1 477.3 L158.8 477.7 L157.5 477.3 L156.8 476.3 L156.9 475.0 L157.8 473.9 L159.1 473.4 L160.4 473.8 L161.1 474.9 L161.0 476.2Z M101.4 462.9 L101.4 461.2 L102.2 460.0 L103.4 459.7 L104.7 460.5 L105.4 462.0 L105.4 463.6 L104.6 464.8 L103.3 465.1 L102.1 464.3Z M175.5 560.8 L174.3 560.5 L173.5 559.8 L173.6 559.0 L174.3 558.3 L175.6 558.1 L176.8 558.4 L177.5 559.1 L177.5 559.9 L176.7 560.6Z M164.1 484.6 L163.4 485.9 L162.1 486.5 L160.9 486.2 L160.2 485.1 L160.2 483.5 L161.0 482.2 L162.2 481.6 L163.4 482.0 L164.1 483.1Z M182.2 515.7 L180.4 515.8 L179.0 515.3 L178.7 514.3 L179.6 513.1 L181.3 512.3 L183.2 512.1 L184.5 512.6 L184.8 513.7 L183.9 514.9Z M183.7 564.3 L182.7 565.7 L181.4 566.3 L180.4 565.8 L180.0 564.5 L180.3 562.9 L181.3 561.5 L182.5 560.9 L183.6 561.4 L184.0 562.7Z M174.0 598.7 L172.6 598.5 L171.6 597.8 L171.5 596.8 L172.2 595.8 L173.6 595.3 L175.0 595.4 L175.9 596.2 L176.1 597.2 L175.4 598.2Z M148.3 566.4 L148.1 568.2 L147.3 569.4 L146.2 569.5 L145.2 568.4 L144.7 566.7 L145.0 564.9 L145.8 563.7 L146.9 563.6 L147.8 564.7Z M163.3 505.1 L162.7 506.5 L161.5 507.2 L160.4 507.0 L159.6 505.8 L159.6 504.3 L160.2 502.9 L161.4 502.1 L162.6 502.4 L163.3 503.5Z M123.3 491.7 L122.1 492.5 L120.8 492.6 L119.8 491.8 L119.6 490.5 L120.1 489.2 L121.3 488.3 L122.7 488.2 L123.6 489.0 L123.9 490.3Z M128.9 556.6 L127.5 555.6 L127.0 554.4 L127.4 553.4 L128.7 553.0 L130.3 553.3 L131.7 554.3 L132.2 555.5 L131.8 556.5 L130.5 556.9Z M132.5 485.5 L132.7 484.0 L133.5 483.0 L134.6 482.8 L135.6 483.6 L136.1 485.1 L135.9 486.6 L135.1 487.6 L134.0 487.8 L133.0 487.0Z M130.6 552.2 L130.0 550.9 L130.3 549.7 L131.1 549.0 L132.4 549.0 L133.5 549.9 L134.0 551.2 L133.8 552.4 L132.9 553.1 L131.7 553.0Z M104.0 457.4 L103.5 458.8 L102.6 459.6 L101.7 459.4 L101.1 458.4 L101.1 456.8 L101.7 455.4 L102.6 454.6 L103.5 454.8 L104.0 455.9Z M124.6 507.4 L123.4 506.8 L122.7 505.9 L122.9 505.1 L123.9 504.5 L125.2 504.5 L126.4 505.0 L127.1 505.9 L126.9 506.8 L125.9 507.4Z M105.6 458.7 L105.6 457.5 L106.1 456.6 L107.0 456.3 L107.9 456.9 L108.5 458.0 L108.5 459.2 L108.0 460.1 L107.1 460.4 L106.2 459.8Z M156.9 586.8 L155.7 587.9 L154.3 588.1 L153.2 587.4 L152.9 586.1 L153.4 584.5 L154.7 583.4 L156.0 583.2 L157.1 583.9 L157.4 585.3Z M148.6 563.6 L147.7 562.5 L147.6 561.2 L148.3 560.2 L149.6 559.9 L150.9 560.4 L151.8 561.5 L151.9 562.8 L151.2 563.8 L150.0 564.1Z M167.0 480.6 L167.0 478.7 L167.8 477.3 L169.2 477.0 L170.6 477.9 L171.4 479.6 L171.4 481.5 L170.5 482.9 L169.2 483.2 L167.8 482.3Z M145.1 544.2 L143.2 544.0 L141.9 543.1 L141.7 541.8 L142.7 540.5 L144.5 539.8 L146.4 540.0 L147.7 540.9 L147.9 542.3 L146.9 543.5Z M136.5 506.8 L137.1 505.7 L138.1 505.2 L139.0 505.5 L139.5 506.4 L139.5 507.6 L138.9 508.7 L138.0 509.2 L137.1 508.9 L136.5 508.0Z M160.1 481.3 L159.0 482.1 L157.8 482.1 L157.2 481.5 L157.2 480.4 L157.9 479.2 L159.0 478.5 L160.1 478.4 L160.8 479.0 L160.8 480.1Z M137.7 548.5 L136.5 549.7 L135.1 550.0 L133.9 549.4 L133.5 548.0 L134.0 546.4 L135.1 545.2 L136.6 544.9 L137.7 545.5 L138.1 546.9Z M139.8 481.5 L138.2 480.7 L137.5 479.6 L137.8 478.6 L139.0 478.0 L140.7 478.1 L142.2 478.8 L143.0 479.9 L142.7 481.0 L141.5 481.6Z M161.0 598.5 L159.6 598.0 L158.8 597.0 L159.0 595.9 L160.0 595.1 L161.5 595.0 L163.0 595.5 L163.7 596.5 L163.6 597.6 L162.6 598.4Z M164.2 512.4 L164.4 511.1 L165.3 510.2 L166.3 510.1 L167.2 510.9 L167.7 512.2 L167.4 513.6 L166.6 514.5 L165.5 514.5 L164.6 513.8Z M171.6 595.5 L170.3 596.3 L168.9 596.3 L167.9 595.4 L167.9 594.0 L168.6 592.6 L170.0 591.8 L171.4 591.9 L172.3 592.8 L172.4 594.2Z M138.4 538.9 L137.7 537.8 L137.6 536.7 L138.2 536.1 L139.3 536.2 L140.4 537.0 L141.2 538.2 L141.2 539.2 L140.6 539.8 L139.5 539.7Z M159.5 489.3 L158.2 489.5 L157.1 489.0 L156.8 488.1 L157.3 487.1 L158.4 486.3 L159.8 486.2 L160.8 486.7 L161.1 487.6 L160.6 488.6Z M159.0 541.8 L159.1 540.3 L159.7 539.3 L160.7 539.1 L161.6 539.8 L162.2 541.2 L162.2 542.7 L161.5 543.7 L160.5 543.9 L159.6 543.2Z M137.2 481.1 L136.7 482.4 L135.7 483.1 L134.6 483.0 L133.8 482.0 L133.7 480.6 L134.2 479.2 L135.2 478.5 L136.3 478.7 L137.1 479.6Z" stroke="#00f" stroke-width="1" fill="none"/>
<path d="M84.6 369.6 L78.5 366.2 M79.9 373.8 L77.0 367.5 M72.9 373.7 L75.8 367.4 M68.3 369.5 L74.5 366.1 M68.6 362.0 L74.7 365.5 M74.4 357.8 L75.4 364.7 M80.4 358.4 L77.5 364.8 M85.2 364.0 L78.3 365.2 M89.8 399.9 L81.8 399.1 M86.4 406.9 L81.0 401.0 M80.1 410.3 L78.8 402.4 M72.0 408.2 L77.4 402.3 M68.0 402.6 L75.5 400.0 M67.1 396.0 L75.1 396.8 M69.4 389.6 L76.2 393.9 M76.1 384.8 L77.3 392.7 M83.3 385.8 L79.7 392.9 M88.3 390.7 L81.5 395.0 M76.1 369.6 L69.9 374.9 M79.0 374.7 L72.5 379.3 M81.9 379.5 L75.2 383.9 M84.5 383.4 L78.8 389.2 M87.8 388.0 L81.8 393.5 M91.2 393.1 L84.5 397.6 M94.2 398.3 L87.0 401.9 M96.5 402.5 L90.0 407.4 M99.2 407.8 L92.3 411.9 M102.2 413.4 L94.5 416.0 M96.2 420.9 L104.3 416.8 M98.0 425.4 L106.2 421.6 M99.6 429.5 L108.2 426.8 M101.1 434.3 L109.6 431.6 M101.9 438.4 L110.8 437.2 M101.7 441.7 L110.4 443.9 M100.4 444.5 L107.5 450.1 M102.3 443.9 L96.8 451.1 M99.8 441.1 L92.6 446.6 M98.5 438.4 L89.6 440.3 M97.0 433.4 L88.3 435.7 M96.0 428.7 L87.1 430.6 M95.0 424.1 L86.0 425.5 M93.9 418.9 L85.1 420.8 M93.2 414.3 L84.3 415.6 M85.6 416.1 L86.8 406.7 M87.5 414.6 L78.1 413.0 M86.5 419.6 L77.1 417.8 M86.0 424.1 L76.5 423.2 M85.8 428.4 L76.3 428.8 M85.9 433.6 L76.4 433.6 M86.4 437.2 L77.3 439.8 M87.6 441.7 L78.6 445.0 M89.1 446.4 L80.2 449.7 M90.7 450.2 L82.5 455.1 M93.1 454.3 L85.1 459.5 M95.8 457.3 L89.0 464.0 M99.0 461.2 L92.1 467.8 M101.6 463.9 L96.5 472.0 M103.9 464.9 L103.2 474.3 M108.0 464.6 L109.0 474.1 M110.4 467.3 L114.8 470.5 M114.2 462.9 L117.5 467.3 M119.6 460.7 L119.8 466.3 M125.2 463.1 L122.1 467.6 M129.1 467.6 L124.1 469.9 M130.5 473.5 L125.0 473.6 M129.1 479.2 L124.3 476.6 M125.2 483.9 L122.9 478.9 M119.3 481.8 L123.5 478.2 M116.4 476.8 L121.8 475.5 M118.5 470.8 L121.8 475.2 M110.3 471.2 L114.6 472.6 M109.4 478.8 L113.8 479.3 M110.2 486.6 L114.5 485.2 M112.9 492.4 L116.6 489.8 M118.8 496.8 L121.4 493.1 M126.1 498.0 L125.6 493.5 M133.2 495.7 L130.7 492.0 M138.8 490.8 L135.0 488.3 M143.9 485.6 L140.4 482.8 M148.8 479.6 L144.7 477.6 M124.0 534.5 L126.4 530.7 M119.7 529.8 L123.9 531.5 M124.9 525.9 L125.7 530.3 M130.6 528.9 L126.9 531.4 M132.0 535.9 L127.6 535.0 M129.5 542.3 L125.4 540.2 M123.8 546.2 L122.4 541.9 M117.3 543.3 L120.8 540.5 M114.2 536.8 L118.6 535.8 M113.6 529.6 L118.1 530.1 M115.9 522.4 L119.7 524.9 M120.5 517.2 L122.7 521.1 M127.4 514.1 L127.9 518.7 M133.9 513.9 L133.5 518.4 M140.4 517.9 L137.0 520.9 M145.6 523.4 L141.9 526.0 M150.4 529.2 L146.4 531.4 M154.6 531.2 L152.8 526.0 M161.6 528.0 L158.9 523.2 M167.8 523.2 L163.8 519.4 M172.6 517.4 L168.2 514.1 M175.0 509.5 L169.8 511.2 M171.3 503.3 L166.4 506.0 M167.0 496.8 L162.0 499.1 M167.2 490.3 L162.2 487.9 M172.6 489.0 L174.3 483.7 M179.9 491.3 L181.6 486.1 M166.6 524.8 L161.4 532.2 M172.9 531.8 L164.7 535.6 M171.9 541.1 L164.5 535.9 M167.5 547.3 L159.7 542.9 M167.4 553.6 L158.6 555.3 M169.1 561.4 L160.3 563.0 M170.2 569.5 L161.2 570.0 M170.5 577.3 L161.6 578.2 M173.1 584.2 L165.2 588.7 M178.2 588.1 L175.1 596.6 M169.0 528.9 L171.4 526.4 M171.3 539.0 L174.2 541.1 M164.9 548.6 L168.0 550.4 M167.0 558.4 L170.5 558.1 M168.7 569.1 L172.2 569.9 M169.4 580.2 L173.0 579.8 M175.5 588.4 L178.2 585.9 M145.1 574.4 L146.2 570.0 M152.5 573.4 L149.0 570.5 M155.8 567.5 L151.6 565.8 M156.3 559.8 L152.0 561.3 M152.9 553.7 L149.8 557.0 M147.9 549.7 L145.7 553.7 M141.3 553.1 L145.2 555.5 M137.1 559.0 L141.5 560.3 M135.5 565.2 L140.0 566.3 M136.3 573.3 L140.6 571.5 M138.6 579.9 L142.8 578.4 M144.3 586.0 L138.3 591.3 M149.0 591.7 L143.2 597.2 M154.2 597.0 L148.7 602.8 M159.8 600.8 L155.8 607.7 M166.2 603.8 L163.3 611.2 M173.0 605.5 L171.3 613.4 M180.4 606.5 L179.0 614.4 M143.5 481 L147.5 481 M148.0 483.5 L151.0 483.5 M153.0 481 L156.5 481 M143.5 486 L147.5 486 M148.0 488.5 L151.0 488.5 M153.0 486 L156.5 486 M143.5 491 L147.5 491 M148.0 493.5 L151.0 493.5 M153.0 491 L156.5 491 M143.5 496 L147.5 496 M148.0 498.5 L151.0 498.5 M153.0 496 L156.5 496 M143.5 501 L147.5 501 M148.0 503.5 L151.0 503.5 M153.0 501 L156.5 501 M143.5 506 L147.5 506 M148.0 508.5 L151.0 508.5 M153.0 506 L156.5 506 M143.5 511 L147.5 511 M148.0 513.5 L151.0 513.5 M153.0 511 L156.5 511 M143.5 516 L147.5 516 M148.0 518.5 L151.0 518.5 M153.0 516 L156.5 516 M143.5 521 L147.5 521 M148.0 523.5 L151.0 523.5 M153.0 521 L156.5 521 M143.5 526 L147.5 526 M148.0 528.5 L151.0 528.5 M153.0 526 L156.5 526 M108.8 454.7 L112.8 455.3 M157.4 516.0 L161.3 516.8 M170.6 598.1 L167.0 599.9 M153.0 469.7 L156.6 471.4" stroke="#00f" stroke-width="2.5" fill="none"/>
<path d="M77.7 319.7 L85.0 315.2 M79.5 326.3 L86.7 321.7 M81.6 332.9 L88.6 327.9 M84.2 339.4 L90.9 334.1 M86.3 345.6 L93.4 340.8 M88.1 352.1 L95.3 347.5 M90.2 358.7 L97.2 353.7 M92.6 365.2 L99.4 359.9 M95.6 371.7 L101.8 365.8 M98.9 377.8 L104.8 371.6 M102.7 383.7 L108.1 377.1 M107.1 389.4 L111.7 382.2 M112.3 394.4 L115.9 386.7 M117.5 398.9 L120.9 391.1 M122.9 403.2 L126.0 395.3 M128.8 407.2 L131.1 399.0 M135.3 410.4 L136.3 401.9 M142.0 412.8 L142.2 404.3 M148.9 414.5 L148.4 406.0 M153.5 416.8 L156.8 408.9 M156.0 420.4 L163.4 416.1 M157.7 427.0 L165.0 422.6 M159.5 433.7 L166.7 429.1 M161.2 440.2 L168.5 435.7 M163.1 446.8 L170.3 442.2 M165.1 453.4 L172.2 448.6 M167.3 459.9 L174.2 454.9 M169.6 466.4 L176.4 461.2 M172.3 472.9 L178.7 467.3 M178.2 479.1 L180.5 470.9" stroke="#00f" stroke-width="3" fill="none"/>
</g>
<path d="M80.0 316.0 L80.3 317.1 L80.7 318.6 L81.2 320.3 L81.7 322.2 L82.3 324.3 L82.9 326.3 L83.4 328.2 L84.0 330.0 L84.5 331.6 L85.1 333.1 L85.7 334.5 L86.2 335.9 L86.8 337.4 L87.4 338.8 L87.9 340.4 L88.5 342.0 L89.1 343.7 L89.6 345.6 L90.1 347.4 L90.7 349.4 L91.2 351.3 L91.8 353.2 L92.4 355.2 L93.0 357.0 L93.6 358.8 L94.3 360.6 L94.9 362.3 L95.6 364.0 L96.3 365.8 L97.1 367.5 L97.9 369.2 L98.8 371.0 L99.8 372.8 L100.8 374.7 L101.9 376.6 L103.1 378.5 L104.3 380.3 L105.5 382.1 L106.7 383.9 L108.0 385.5 L109.3 387.0 L110.6 388.5 L112.0 389.8 L113.4 391.1 L114.8 392.4 L116.2 393.6 L117.6 394.8 L119.0 396.0 L120.4 397.2 L121.8 398.3 L123.1 399.4 L124.5 400.5 L125.9 401.5 L127.3 402.4 L128.6 403.4 L130.0 404.2 L131.3 405.0 L132.6 405.7 L133.9 406.3 L135.2 406.9 L136.5 407.5 L137.8 408.0 L139.2 408.5 L140.6 409.0 L142.1 409.5 L143.9 410.0 L145.7 410.5 L147.5 410.9 L149.2 411.3 L150.7 411.7 L152.0 412.0 L153.0 412.2 L158.4 416.6 L158.7 417.6 L159.0 419.0 L159.4 420.6 L159.8 422.4 L160.3 424.3 L160.8 426.4 L161.4 428.6 L162.0 430.8 L162.6 433.1 L163.3 435.7 L164.1 438.4 L164.8 441.2 L165.6 444.0 L166.4 446.8 L167.2 449.5 L168.0 452.0 L168.8 454.5 L169.6 457.0 L170.5 459.5 L171.4 461.9 L172.2 464.2 L173.0 466.3 L173.7 468.2 L174.4 469.8 L175.0 471.1 L175.5 472.0 L175.9 472.8 L176.4 473.4 L176.7 473.8 L177.1 474.2 L177.6 474.6 L178.0 475.0 L178.5 475.5 L179.1 475.9 L179.6 476.2 L180.2 476.6 L180.8 476.9 L181.3 477.1 L181.7 477.3 L182.0 477.5 M82.0 366.0 L81.7 367.5 L80.9 368.9 L79.7 370.0 L78.2 370.8 L76.5 371.0 L74.8 370.8 L73.3 370.0 L72.1 368.9 L71.3 367.5 L71.0 366.0 L71.3 364.5 L72.1 363.1 L73.3 362.0 L74.8 361.2 L76.5 361.0 L78.2 361.2 L79.7 362.0 L80.9 363.1 L81.7 364.5 L82.0 366.0 M93.0 357.0 L83.0 363.5 M86.0 397.5 L85.7 399.8 L85.0 402.0 L83.8 403.9 L82.2 405.3 L80.4 406.2 L78.5 406.5 L76.6 406.2 L74.8 405.3 L73.2 403.9 L72.0 402.0 L71.3 399.8 L71.0 397.5 L71.3 395.2 L72.0 393.0 L73.2 391.1 L74.8 389.7 L76.6 388.8 L78.5 388.5 L80.4 388.8 L82.2 389.7 L83.8 391.1 L85.0 393.0 L85.7 395.2 L86.0 397.5 M72.0 370.5 L72.6 371.4 L73.3 372.7 L74.1 374.2 L75.1 375.9 L76.1 377.7 L77.2 379.4 L78.2 381.1 L79.2 382.7 L80.2 384.2 L81.2 385.6 L82.2 387.1 L83.2 388.5 L84.2 389.9 L85.2 391.3 L86.1 392.7 L87.0 394.0 L87.8 395.3 L88.5 396.5 L89.2 397.7 L89.9 398.9 L90.6 400.1 L91.2 401.3 L91.9 402.6 L92.7 404.0 L93.5 405.6 L94.5 407.3 L95.5 409.2 L96.5 411.1 L97.4 412.9 L98.3 414.6 L99.0 416.0 L99.5 417.0 M99.5 417.0 L100.0 418.2 L100.6 419.7 L101.3 421.6 L102.2 423.7 L103.0 425.8 L103.8 427.9 L104.5 429.9 L105.0 431.6 L105.4 433.1 L105.8 434.5 L106.0 435.9 L106.3 437.2 L106.4 438.4 L106.5 439.6 L106.4 440.7 L106.3 441.8 L106.0 442.9 L105.7 444.0 L105.2 445.2 L104.7 446.2 L104.1 447.1 L103.4 447.8 L102.7 448.3 L102.0 448.5 L101.2 448.4 L100.4 448.0 L99.5 447.4 L98.5 446.6 L97.6 445.7 L96.6 444.5 L95.8 443.2 L95.0 441.8 L94.3 440.1 L93.6 438.2 L93.0 436.0 L92.5 433.7 L91.9 431.4 L91.4 429.0 L90.9 426.8 L90.5 424.8 L90.1 422.9 L89.7 420.9 L89.4 418.9 L89.1 417.0 L88.8 415.2 L88.6 413.6 L88.4 412.3 L88.2 411.3 M88.2 411.3 L87.7 411.3 L87.1 411.3 L86.3 411.2 L85.5 411.1 L84.7 411.2 L83.9 411.6 L83.2 412.3 L82.6 413.5 L82.2 415.2 L81.7 417.4 L81.4 419.9 L81.1 422.7 L80.9 425.6 L80.8 428.5 L80.8 431.3 L80.9 433.9 L81.2 436.3 L81.7 438.8 L82.2 441.2 L82.9 443.6 L83.7 446.0 L84.5 448.1 L85.2 450.2 L86.0 452.0 L86.7 453.6 L87.5 455.0 L88.3 456.2 L89.1 457.3 L90.0 458.3 L90.8 459.3 L91.7 460.3 L92.6 461.3 L93.5 462.4 L94.4 463.6 L95.4 464.7 L96.4 465.8 L97.4 466.9 L98.4 467.8 L99.4 468.6 L100.5 469.2 L101.7 469.6 L103.0 469.8 L104.4 469.9 L105.7 469.8 L107.1 469.7 L108.3 469.6 L109.3 469.5 L110.0 469.5 M110.0 469.5 L110.4 469.0 L110.9 468.3 L111.5 467.5 L112.1 466.6 L112.8 465.7 L113.6 464.8 L114.3 464.1 L115.0 463.5 L115.7 463.0 L116.4 462.6 L117.1 462.3 L117.8 462.0 L118.5 461.8 L119.3 461.7 L120.0 461.8 L120.8 461.9 L121.6 462.2 L122.5 462.6 L123.5 463.1 L124.5 463.7 L125.4 464.4 L126.2 465.2 L127.0 466.0 L127.6 466.9 L128.1 467.9 L128.5 468.9 L128.9 470.1 L129.2 471.3 L129.4 472.5 L129.5 473.8 L129.4 474.9 L129.3 476.0 L129.0 477.1 L128.5 478.2 L127.9 479.4 L127.2 480.5 L126.5 481.5 L125.7 482.3 L124.9 482.9 L124.2 483.3 L123.5 483.4 L122.7 483.1 L121.9 482.7 L121.1 482.1 L120.3 481.4 L119.6 480.7 L119.0 480.0 L118.5 479.3 L118.1 478.7 L117.8 478.0 L117.6 477.2 L117.4 476.5 L117.3 475.7 L117.3 475.0 L117.3 474.3 L117.4 473.7 L117.6 473.1 L118.0 472.6 L118.5 472.1 L119.0 471.6 L119.6 471.2 L120.1 470.9 L120.5 470.5 L120.8 470.3 M110.0 469.5 L109.9 470.3 L109.7 471.5 L109.5 472.8 L109.3 474.3 L109.1 475.9 L108.9 477.5 L108.9 479.0 L108.9 480.5 L109.0 481.9 L109.2 483.4 L109.4 484.9 L109.7 486.4 L110.0 487.9 L110.5 489.3 L111.1 490.6 L111.8 491.8 L112.7 492.9 L113.8 494.0 L115.0 495.0 L116.3 496.0 L117.7 496.8 L119.1 497.6 L120.5 498.1 L121.9 498.5 L123.3 498.7 L124.7 498.7 L126.2 498.5 L127.7 498.2 L129.2 497.8 L130.6 497.3 L132.0 496.8 L133.2 496.3 L134.3 495.7 L135.3 495.0 L136.2 494.2 L137.1 493.4 L137.9 492.5 L138.7 491.7 L139.5 490.8 L140.3 490.0 L141.1 489.2 L141.8 488.5 L142.6 487.8 L143.3 487.0 L144.0 486.3 L144.7 485.5 L145.3 484.8 L146.0 484.0 L146.7 483.2 L147.4 482.3 L148.1 481.3 L148.9 480.4 L149.5 479.5 L150.1 478.7 L150.6 478.0 L151.0 477.5 M125.4 536.0 L124.9 535.6 L124.1 535.1 L123.1 534.5 L122.1 533.8 L121.1 533.1 L120.2 532.4 L119.6 531.7 L119.2 531.0 L119.1 530.3 L119.3 529.6 L119.6 528.8 L120.1 528.1 L120.7 527.4 L121.3 526.8 L122.0 526.3 L122.6 525.9 L123.3 525.6 L124.1 525.5 L125.0 525.4 L126.0 525.3 L126.9 525.4 L127.8 525.6 L128.6 525.9 L129.3 526.4 L129.9 527.0 L130.5 527.8 L131.1 528.8 L131.6 529.8 L132.1 530.9 L132.4 532.1 L132.6 533.2 L132.7 534.3 L132.6 535.4 L132.4 536.6 L132.1 537.9 L131.6 539.1 L131.1 540.4 L130.5 541.5 L129.9 542.5 L129.3 543.4 L128.6 544.2 L127.9 544.8 L127.0 545.4 L126.2 546.0 L125.3 546.4 L124.4 546.6 L123.5 546.8 L122.6 546.8 L121.7 546.7 L120.8 546.4 L119.9 546.0 L119.0 545.4 L118.1 544.8 L117.2 544.0 L116.5 543.1 L115.8 542.2 L115.2 541.1 L114.7 539.9 L114.2 538.5 L113.7 537.0 L113.4 535.5 L113.1 534.0 L113.0 532.4 L113.0 531.0 L113.1 529.6 L113.4 528.1 L113.8 526.5 L114.3 525.0 L114.8 523.5 L115.5 522.1 L116.2 520.8 L117.0 519.7 L117.9 518.7 L118.9 517.7 L120.0 516.9 L121.1 516.1 L122.3 515.5 L123.6 514.9 L124.8 514.4 L126.0 514.0 L127.2 513.7 L128.5 513.4 L129.7 513.2 L131.0 513.1 L132.3 513.2 L133.5 513.3 L134.8 513.6 L136.0 514.0 L137.2 514.6 L138.4 515.4 L139.5 516.4 L140.7 517.4 L141.8 518.6 L142.9 519.7 L144.0 520.9 L145.0 522.0 L146.1 523.1 L147.2 524.4 L148.3 525.7 L149.3 527.0 L150.3 528.2 L151.2 529.4 L151.9 530.3 L152.5 531.0 M152.5 531.0 L153.4 530.6 L154.6 530.1 L156.1 529.5 L157.7 528.8 L159.4 528.0 L161.0 527.2 L162.6 526.3 L164.0 525.3 L165.3 524.2 L166.6 523.0 L167.9 521.6 L169.2 520.2 L170.4 518.8 L171.4 517.4 L172.3 516.1 L173.0 515.0 L173.5 514.0 L173.9 513.2 L174.2 512.5 L174.3 511.8 L174.3 511.0 L174.2 510.3 L174.0 509.5 L173.6 508.5 L173.0 507.4 L172.2 506.1 L171.2 504.8 L170.1 503.4 L169.0 502.0 L168.0 500.7 L167.1 499.4 L166.5 498.2 L166.1 497.1 L165.7 496.0 L165.5 494.9 L165.4 493.9 L165.4 492.9 L165.4 492.0 L165.6 491.2 L165.9 490.5 L166.3 489.9 L166.8 489.4 L167.5 488.9 L168.2 488.6 L169.0 488.3 L169.9 488.1 L170.8 487.9 L171.7 487.9 L172.7 488.0 L173.9 488.2 L175.2 488.6 L176.5 489.0 L177.7 489.5 L178.9 489.9 L179.9 490.2 L180.7 490.5 L181.2 490.6 L181.6 490.7 L181.8 490.8 L181.9 490.8 L181.9 490.8 L181.9 490.8 L182.0 490.8 L182.0 490.8 M164.0 525.3 L164.5 525.7 L165.1 526.2 L165.9 526.8 L166.7 527.5 L167.6 528.2 L168.4 529.0 L169.1 529.8 L169.7 530.5 L170.2 531.2 L170.7 531.9 L171.1 532.7 L171.5 533.4 L171.7 534.2 L171.9 535.1 L171.9 536.0 L171.7 537.0 L171.3 538.2 L170.5 539.5 L169.6 540.9 L168.6 542.4 L167.6 543.8 L166.6 545.1 L165.8 546.3 L165.2 547.3 L164.8 547.9 L164.6 548.3 L164.4 548.4 L164.3 548.5 L164.4 548.6 L164.4 548.8 L164.5 549.4 L164.7 550.3 L164.9 551.6 L165.3 553.3 L165.7 555.2 L166.2 557.3 L166.7 559.4 L167.1 561.6 L167.6 563.8 L167.9 565.8 L168.1 567.8 L168.2 569.9 L168.3 572.0 L168.3 574.0 L168.4 576.1 L168.6 578.0 L168.8 579.7 L169.2 581.3 L169.8 582.7 L170.4 583.9 L171.2 585.0 L172.1 586.0 L173.0 586.9 L173.9 587.7 L174.8 588.4 L175.6 589.0 L176.4 589.5 L177.3 589.9 L178.3 590.3 L179.2 590.5 L180.1 590.6 L180.8 590.8 L181.5 590.9 L182.0 591.0 M143.4 574.8 L144.1 574.8 L145.1 574.9 L146.3 575.0 L147.6 575.1 L149.0 575.1 L150.2 575.0 L151.4 574.7 L152.4 574.2 L153.2 573.4 L154.0 572.4 L154.7 571.2 L155.4 569.9 L156.0 568.5 L156.4 567.1 L156.8 565.7 L157.0 564.5 L157.1 563.3 L157.1 562.1 L157.0 561.0 L156.8 559.8 L156.6 558.7 L156.1 557.6 L155.6 556.5 L155.0 555.5 L154.2 554.5 L153.3 553.3 L152.2 552.1 L151.0 551.0 L149.7 550.1 L148.5 549.4 L147.2 549.0 L146.0 549.0 L144.8 549.5 L143.4 550.4 L142.0 551.6 L140.6 553.0 L139.3 554.6 L138.1 556.2 L137.1 557.9 L136.3 559.4 L135.7 560.9 L135.4 562.4 L135.1 564.0 L135.0 565.6 L135.0 567.3 L135.1 568.9 L135.3 570.6 L135.6 572.3 L136.0 574.1 L136.6 576.1 L137.3 578.2 L138.2 580.2 L139.0 582.2 L139.7 583.9 L140.4 585.4 L140.8 586.5 M140.8 586.5 L141.7 587.5 L142.8 588.9 L144.2 590.6 L145.7 592.5 L147.3 594.4 L149.0 596.2 L150.7 597.9 L152.4 599.4 L154.0 600.6 L155.7 601.8 L157.5 602.9 L159.3 603.9 L161.1 604.8 L162.9 605.7 L164.7 606.4 L166.6 607.1 L168.6 607.7 L170.7 608.2 L173.0 608.6 L175.2 608.9 L177.3 609.1 L179.2 609.4 L180.8 609.5 L182.0 609.7" stroke="#f00" stroke-width="1" fill="none"/>
<path d="M151.7 477 V531" stroke="#f00" stroke-width="2"/>
<path d="M115.5 422.0 L121.9 422.5 M115.5 422.0 L121.5 424.0 M115.5 422.0 L120.0 426.2 M115.5 422.0 L117.4 427.8 M115.5 422.0 L115.0 428.3 M115.5 422.0 L113.0 427.3 M115.5 422.0 L110.9 426.1 M115.5 422.0 L109.5 424.5 M115.5 422.0 L109.1 422.4 M115.5 422.0 L109.6 419.4 M115.5 422.0 L111.0 417.2 M115.5 422.0 L113.6 416.3 M115.5 422.0 L115.2 415.8 M115.5 422.0 L117.9 416.0 M115.5 422.0 L120.0 417.4 M115.5 422.0 L120.7 419.4" stroke="#00f" stroke-width="1.1" fill="none"/><circle cx="115.5" cy="422.0" r="2.0" fill="#00f"/><circle cx="115.5" cy="422.0" r="4.6" stroke="#00f" stroke-width="1.2" stroke-dasharray="2 1" fill="none"/><circle cx="115.5" cy="422.0" r="6.9" stroke="#008000" stroke-width="1.7" stroke-dasharray="1.9 0.8" fill="none"/><circle cx="115.5" cy="422.0" r="8.3" stroke="#008000" stroke-width="1.3" stroke-dasharray="1.5 1.2" fill="none"/>
<path d="M132.5 427.0 L138.6 427.4 M132.5 427.0 L138.0 429.4 M132.5 427.0 L136.7 431.3 M132.5 427.0 L135.3 432.9 M132.5 427.0 L132.5 433.1 M132.5 427.0 L129.9 432.5 M132.5 427.0 L127.7 431.2 M132.5 427.0 L126.9 428.9 M132.5 427.0 L126.0 427.4 M132.5 427.0 L126.3 424.9 M132.5 427.0 L128.0 423.1 M132.5 427.0 L130.0 421.4 M132.5 427.0 L132.8 420.8 M132.5 427.0 L134.7 421.1 M132.5 427.0 L137.1 422.6 M132.5 427.0 L138.2 424.9" stroke="#00f" stroke-width="1.1" fill="none"/><circle cx="132.5" cy="427.0" r="2.0" fill="#00f"/><circle cx="132.5" cy="427.0" r="4.6" stroke="#00f" stroke-width="1.2" stroke-dasharray="2 1" fill="none"/><circle cx="132.5" cy="427.0" r="6.9" stroke="#008000" stroke-width="1.7" stroke-dasharray="1.9 0.8" fill="none"/><circle cx="132.5" cy="427.0" r="8.3" stroke="#008000" stroke-width="1.3" stroke-dasharray="1.5 1.2" fill="none"/>
<path d="M124.5 445.0 L130.8 444.8 M124.5 445.0 L129.8 447.4 M124.5 445.0 L129.0 449.8 M124.5 445.0 L126.8 451.0 M124.5 445.0 L124.9 450.9 M124.5 445.0 L122.2 451.1 M124.5 445.0 L120.1 449.7 M124.5 445.0 L118.4 447.5 M124.5 445.0 L117.9 445.4 M124.5 445.0 L118.8 442.2 M124.5 445.0 L120.0 440.9 M124.5 445.0 L122.5 439.1 M124.5 445.0 L124.5 438.6 M124.5 445.0 L127.1 439.7 M124.5 445.0 L128.9 440.9 M124.5 445.0 L129.7 442.4" stroke="#00f" stroke-width="1.1" fill="none"/><circle cx="124.5" cy="445.0" r="2.0" fill="#00f"/><circle cx="124.5" cy="445.0" r="4.6" stroke="#00f" stroke-width="1.2" stroke-dasharray="2 1" fill="none"/><circle cx="124.5" cy="445.0" r="6.9" stroke="#008000" stroke-width="1.7" stroke-dasharray="1.9 0.8" fill="none"/><circle cx="124.5" cy="445.0" r="8.3" stroke="#008000" stroke-width="1.3" stroke-dasharray="1.5 1.2" fill="none"/>
<path d="M145.0 442.0 L151.2 442.2 M145.0 442.0 L151.0 444.4 M145.0 442.0 L149.1 446.4 M145.0 442.0 L147.4 447.3 M145.0 442.0 L144.6 447.9 M145.0 442.0 L143.1 447.7 M145.0 442.0 L141.0 446.7 M145.0 442.0 L139.8 444.6 M145.0 442.0 L138.6 442.5 M145.0 442.0 L139.1 439.9 M145.0 442.0 L140.4 438.0 M145.0 442.0 L142.5 436.5 M145.0 442.0 L145.2 435.4 M145.0 442.0 L147.2 436.0 M145.0 442.0 L149.7 437.4 M145.0 442.0 L151.1 439.5" stroke="#00f" stroke-width="1.1" fill="none"/><circle cx="145.0" cy="442.0" r="2.0" fill="#00f"/><circle cx="145.0" cy="442.0" r="4.6" stroke="#00f" stroke-width="1.2" stroke-dasharray="2 1" fill="none"/><circle cx="145.0" cy="442.0" r="6.9" stroke="#008000" stroke-width="1.7" stroke-dasharray="1.9 0.8" fill="none"/><circle cx="145.0" cy="442.0" r="8.3" stroke="#008000" stroke-width="1.3" stroke-dasharray="1.5 1.2" fill="none"/>
<path d="M146.0 460.5 L152.4 460.8 M146.0 460.5 L151.4 463.1 M146.0 460.5 L150.2 464.7 M146.0 460.5 L147.8 466.1 M146.0 460.5 L145.9 466.4 M146.0 460.5 L143.7 466.4 M146.0 460.5 L141.4 465.0 M146.0 460.5 L140.6 462.9 M146.0 460.5 L140.0 461.0 M146.0 460.5 L140.1 458.0 M146.0 460.5 L141.4 456.1 M146.0 460.5 L143.4 455.0 M146.0 460.5 L145.8 454.0 M146.0 460.5 L148.8 454.6 M146.0 460.5 L150.3 456.2 M146.0 460.5 L151.8 458.0" stroke="#00f" stroke-width="1.1" fill="none"/><circle cx="146.0" cy="460.5" r="2.0" fill="#00f"/><circle cx="146.0" cy="460.5" r="4.6" stroke="#00f" stroke-width="1.2" stroke-dasharray="2 1" fill="none"/><circle cx="146.0" cy="460.5" r="6.9" stroke="#008000" stroke-width="1.7" stroke-dasharray="1.9 0.8" fill="none"/><circle cx="146.0" cy="460.5" r="8.3" stroke="#008000" stroke-width="1.3" stroke-dasharray="1.5 1.2" fill="none"/>
<path d="M108.3 405.0 L109.3 408.5 L112.6 407.1 L110.4 410.0 L113.7 411.7 L110.0 411.9 L110.7 415.5 L108.3 412.7 L105.9 415.5 L106.6 411.9 L102.9 411.7 L106.2 410.0 L104.0 407.1 L107.3 408.5Z" fill="#008000"/>
<path d="M50.5 314.2 L61.0 310.2 L75.5 305.3 L93.2 300.5 L96.5 312.0 L104.2 338.4 L111.0 356.4 L120.0 372.2 L130.0 384.7 L142.5 392.5 L156.0 396.0 L168.5 398.6 L175.3 417.4 L182.0 436.5 M70.7 314.6 L72.0 330.0 L75.0 345.0 L77.5 352.0 L77.0 355.6 L69.6 362.4 L68.5 367.0 L69.0 371.4 L73.5 381.6 L69.6 390.6 L69.0 397.0 L69.6 403.0 L72.4 406.8 L75.8 412.4 L73.5 418.0 L73.5 437.0 L77.0 454.0 L80.2 463.5 L89.2 474.8 L100.5 482.7 L105.0 495.1 L111.8 507.6 L107.6 517.0 L106.3 528.0 L107.9 543.4 L113.5 552.4 L123.1 557.5 L124.5 569.0 L130.5 588.0 L140.8 603.0 L156.3 613.5 L173.0 618.0 L182.0 618.5 M83.1 313.0 L87.0 326.0 L91.2 340.0 L94.0 348.7 L102.0 369.0 L109.0 380.0 L116.6 389.3 L129.7 399.5 L142.0 404.5 L156.6 409.5 L161.0 414.0 L165.0 426.0 L181.5 474.3" stroke="#f0f" stroke-width="1" fill="none"/>
</g>
<use href="#half" transform="translate(364,0) scale(-1,1)"/>
<path d="M182.0 500.5 L188.0 500.4 M182.0 500.5 L187.8 502.6 M182.0 500.5 L186.4 505.2 M182.0 500.5 L184.6 506.1 M182.0 500.5 L181.9 506.9 M182.0 500.5 L179.3 506.5 M182.0 500.5 L177.3 505.0 M182.0 500.5 L176.4 503.3 M182.0 500.5 L176.0 501.0 M182.0 500.5 L176.0 498.3 M182.0 500.5 L177.5 496.5 M182.0 500.5 L180.2 494.9 M182.0 500.5 L181.7 494.1 M182.0 500.5 L184.0 494.8 M182.0 500.5 L186.5 496.3 M182.0 500.5 L187.5 498.1" stroke="#00f" stroke-width="1.1" fill="none"/><circle cx="182.0" cy="500.5" r="2.0" fill="#00f"/><circle cx="182.0" cy="500.5" r="4.6" stroke="#00f" stroke-width="1.2" stroke-dasharray="2 1" fill="none"/><circle cx="182.0" cy="500.5" r="6.9" stroke="#008000" stroke-width="1.7" stroke-dasharray="1.9 0.8" fill="none"/><circle cx="182.0" cy="500.5" r="8.3" stroke="#008000" stroke-width="1.3" stroke-dasharray="1.5 1.2" fill="none"/>
<path d="M182.0 525.0 L188.6 524.9 M182.0 525.0 L187.6 527.8 M182.0 525.0 L185.8 529.4 M182.0 525.0 L184.7 530.6 M182.0 525.0 L181.7 531.0 M182.0 525.0 L179.5 530.3 M182.0 525.0 L177.8 529.3 M182.0 525.0 L176.0 527.2 M182.0 525.0 L175.9 525.0 M182.0 525.0 L176.3 523.0 M182.0 525.0 L177.9 520.3 M182.0 525.0 L179.7 519.3 M182.0 525.0 L181.8 519.2 M182.0 525.0 L184.1 519.0 M182.0 525.0 L186.2 520.6 M182.0 525.0 L187.6 522.3" stroke="#00f" stroke-width="1.1" fill="none"/><circle cx="182.0" cy="525.0" r="2.0" fill="#00f"/><circle cx="182.0" cy="525.0" r="4.6" stroke="#00f" stroke-width="1.2" stroke-dasharray="2 1" fill="none"/><circle cx="182.0" cy="525.0" r="6.9" stroke="#008000" stroke-width="1.7" stroke-dasharray="1.9 0.8" fill="none"/><circle cx="182.0" cy="525.0" r="8.3" stroke="#008000" stroke-width="1.3" stroke-dasharray="1.5 1.2" fill="none"/>
<path d="M182.0 550.3 L187.9 550.5 M182.0 550.3 L187.5 552.5 M182.0 550.3 L186.3 555.0 M182.0 550.3 L184.0 556.5 M182.0 550.3 L182.2 556.1 M182.0 550.3 L180.2 555.9 M182.0 550.3 L177.6 554.6 M182.0 550.3 L175.9 552.4 M182.0 550.3 L175.5 550.8 M182.0 550.3 L176.2 547.5 M182.0 550.3 L178.0 546.1 M182.0 550.3 L179.7 544.3 M182.0 550.3 L182.3 544.1 M182.0 550.3 L184.3 544.2 M182.0 550.3 L186.3 545.5 M182.0 550.3 L187.8 548.3" stroke="#00f" stroke-width="1.1" fill="none"/><circle cx="182.0" cy="550.3" r="2.0" fill="#00f"/><circle cx="182.0" cy="550.3" r="4.6" stroke="#00f" stroke-width="1.2" stroke-dasharray="2 1" fill="none"/><circle cx="182.0" cy="550.3" r="6.9" stroke="#008000" stroke-width="1.7" stroke-dasharray="1.9 0.8" fill="none"/><circle cx="182.0" cy="550.3" r="8.3" stroke="#008000" stroke-width="1.3" stroke-dasharray="1.5 1.2" fill="none"/>
<path d="M182.0 575.5 L188.4 575.3 M182.0 575.5 L187.8 577.4 M182.0 575.5 L186.3 580.2 M182.0 575.5 L183.8 581.0 M182.0 575.5 L181.9 581.7 M182.0 575.5 L179.8 581.5 M182.0 575.5 L177.8 580.2 M182.0 575.5 L176.3 577.4 M182.0 575.5 L175.9 575.3 M182.0 575.5 L176.5 572.9 M182.0 575.5 L177.2 571.3 M182.0 575.5 L179.6 570.1 M182.0 575.5 L181.7 569.3 M182.0 575.5 L184.3 569.9 M182.0 575.5 L186.5 570.7 M182.0 575.5 L187.4 573.2" stroke="#00f" stroke-width="1.1" fill="none"/><circle cx="182.0" cy="575.5" r="2.0" fill="#00f"/><circle cx="182.0" cy="575.5" r="4.6" stroke="#00f" stroke-width="1.2" stroke-dasharray="2 1" fill="none"/><circle cx="182.0" cy="575.5" r="6.9" stroke="#008000" stroke-width="1.7" stroke-dasharray="1.9 0.8" fill="none"/><circle cx="182.0" cy="575.5" r="8.3" stroke="#008000" stroke-width="1.3" stroke-dasharray="1.5 1.2" fill="none"/>
<path d="M182.5 373 V639" stroke="#f0f" stroke-width="1"/>
<path d="M182.5 591 V610" stroke="#f00" stroke-width="1"/>

</g>
<g shape-rendering="crispEdges" fill="none" stroke-width="1">
<path d="M79.5 89V859 M3 312.5H360" stroke="#0f0"/>
<path d="M211.5 89V858 M3 509.5H360" stroke="#f00"/>
</g>
<g filter="url(#th)">
<text class="g" x="83.3" y="96" style="fill:#0f0;font-size:8.5px">1</text>
<text class="g" x="7.6" y="311" style="fill:#0f0">1</text>
<text class="g" x="349" y="508" style="fill:#f00">2</text>
<text class="g" x="215.2" y="856.3" style="fill:#f00">2</text>
</g>
<g transform="translate(481 739)" opacity="0.95">
<path d="M0.00 0.00h15.70v2.24h-15.70zM31.41 0.00h4.49v2.24h-4.49zM42.62 0.00h6.73v2.24h-6.73zM53.84 0.00h6.73v2.24h-6.73zM67.30 0.00h15.70v2.24h-15.70zM0.00 2.24h2.24v2.24h-2.24zM13.46 2.24h2.24v2.24h-2.24zM17.95 2.24h2.24v2.24h-2.24zM22.43 2.24h2.24v2.24h-2.24zM26.92 2.24h4.49v2.24h-4.49zM33.65 2.24h4.49v2.24h-4.49zM42.62 2.24h2.24v2.24h-2.24zM51.59 2.24h2.24v2.24h-2.24zM62.81 2.24h2.24v2.24h-2.24zM67.30 2.24h2.24v2.24h-2.24zM80.76 2.24h2.24v2.24h-2.24zM0.00 4.49h2.24v2.24h-2.24zM4.49 4.49h6.73v2.24h-6.73zM13.46 4.49h2.24v2.24h-2.24zM17.95 4.49h11.22v2.24h-11.22zM31.41 4.49h2.24v2.24h-2.24zM35.89 4.49h4.49v2.24h-4.49zM42.62 4.49h6.73v2.24h-6.73zM51.59 4.49h2.24v2.24h-2.24zM56.08 4.49h2.24v2.24h-2.24zM62.81 4.49h2.24v2.24h-2.24zM67.30 4.49h2.24v2.24h-2.24zM71.78 4.49h6.73v2.24h-6.73zM80.76 4.49h2.24v2.24h-2.24zM0.00 6.73h2.24v2.24h-2.24zM4.49 6.73h6.73v2.24h-6.73zM13.46 6.73h2.24v2.24h-2.24zM20.19 6.73h2.24v2.24h-2.24zM24.68 6.73h6.73v2.24h-6.73zM33.65 6.73h2.24v2.24h-2.24zM42.62 6.73h4.49v2.24h-4.49zM51.59 6.73h2.24v2.24h-2.24zM60.57 6.73h2.24v2.24h-2.24zM67.30 6.73h2.24v2.24h-2.24zM71.78 6.73h6.73v2.24h-6.73zM80.76 6.73h2.24v2.24h-2.24zM0.00 8.97h2.24v2.24h-2.24zM4.49 8.97h6.73v2.24h-6.73zM13.46 8.97h2.24v2.24h-2.24zM17.95 8.97h4.49v2.24h-4.49zM26.92 8.97h2.24v2.24h-2.24zM33.65 8.97h11.22v2.24h-11.22zM49.35 8.97h4.49v2.24h-4.49zM58.32 8.97h4.49v2.24h-4.49zM67.30 8.97h2.24v2.24h-2.24zM71.78 8.97h6.73v2.24h-6.73zM80.76 8.97h2.24v2.24h-2.24zM0.00 11.22h2.24v2.24h-2.24zM13.46 11.22h2.24v2.24h-2.24zM20.19 11.22h6.73v2.24h-6.73zM29.16 11.22h4.49v2.24h-4.49zM35.89 11.22h2.24v2.24h-2.24zM47.11 11.22h6.73v2.24h-6.73zM56.08 11.22h4.49v2.24h-4.49zM67.30 11.22h2.24v2.24h-2.24zM80.76 11.22h2.24v2.24h-2.24zM0.00 13.46h15.70v2.24h-15.70zM17.95 13.46h2.24v2.24h-2.24zM22.43 13.46h2.24v2.24h-2.24zM26.92 13.46h2.24v2.24h-2.24zM31.41 13.46h2.24v2.24h-2.24zM35.89 13.46h2.24v2.24h-2.24zM40.38 13.46h2.24v2.24h-2.24zM44.86 13.46h2.24v2.24h-2.24zM49.35 13.46h2.24v2.24h-2.24zM53.84 13.46h2.24v2.24h-2.24zM58.32 13.46h2.24v2.24h-2.24zM62.81 13.46h2.24v2.24h-2.24zM67.30 13.46h15.70v2.24h-15.70zM20.19 15.70h4.49v2.24h-4.49zM26.92 15.70h11.22v2.24h-11.22zM44.86 15.70h8.97v2.24h-8.97zM58.32 15.70h2.24v2.24h-2.24zM6.73 17.95h2.24v2.24h-2.24zM11.22 17.95h6.73v2.24h-6.73zM22.43 17.95h2.24v2.24h-2.24zM31.41 17.95h2.24v2.24h-2.24zM35.89 17.95h2.24v2.24h-2.24zM40.38 17.95h2.24v2.24h-2.24zM49.35 17.95h2.24v2.24h-2.24zM58.32 17.95h2.24v2.24h-2.24zM76.27 17.95h2.24v2.24h-2.24zM0.00 20.19h2.24v2.24h-2.24zM8.97 20.19h2.24v2.24h-2.24zM20.19 20.19h2.24v2.24h-2.24zM31.41 20.19h6.73v2.24h-6.73zM40.38 20.19h2.24v2.24h-2.24zM47.11 20.19h24.68v2.24h-24.68zM76.27 20.19h2.24v2.24h-2.24zM80.76 20.19h2.24v2.24h-2.24zM0.00 22.43h8.97v2.24h-8.97zM11.22 22.43h6.73v2.24h-6.73zM20.19 22.43h2.24v2.24h-2.24zM24.68 22.43h2.24v2.24h-2.24zM33.65 22.43h2.24v2.24h-2.24zM40.38 22.43h4.49v2.24h-4.49zM56.08 22.43h2.24v2.24h-2.24zM60.57 22.43h4.49v2.24h-4.49zM69.54 22.43h2.24v2.24h-2.24zM76.27 22.43h6.73v2.24h-6.73zM0.00 24.68h2.24v2.24h-2.24zM4.49 24.68h2.24v2.24h-2.24zM15.70 24.68h2.24v2.24h-2.24zM20.19 24.68h6.73v2.24h-6.73zM29.16 24.68h8.97v2.24h-8.97zM40.38 24.68h4.49v2.24h-4.49zM49.35 24.68h2.24v2.24h-2.24zM53.84 24.68h2.24v2.24h-2.24zM60.57 24.68h6.73v2.24h-6.73zM69.54 24.68h2.24v2.24h-2.24zM74.03 24.68h2.24v2.24h-2.24zM0.00 26.92h2.24v2.24h-2.24zM4.49 26.92h2.24v2.24h-2.24zM8.97 26.92h6.73v2.24h-6.73zM17.95 26.92h4.49v2.24h-4.49zM26.92 26.92h6.73v2.24h-6.73zM40.38 26.92h2.24v2.24h-2.24zM44.86 26.92h2.24v2.24h-2.24zM53.84 26.92h2.24v2.24h-2.24zM58.32 26.92h4.49v2.24h-4.49zM65.05 26.92h4.49v2.24h-4.49zM71.78 26.92h2.24v2.24h-2.24zM78.51 26.92h4.49v2.24h-4.49zM4.49 29.16h4.49v2.24h-4.49zM11.22 29.16h2.24v2.24h-2.24zM15.70 29.16h4.49v2.24h-4.49zM24.68 29.16h4.49v2.24h-4.49zM60.57 29.16h4.49v2.24h-4.49zM67.30 29.16h2.24v2.24h-2.24zM71.78 29.16h4.49v2.24h-4.49zM78.51 29.16h4.49v2.24h-4.49zM0.00 31.41h6.73v2.24h-6.73zM13.46 31.41h8.97v2.24h-8.97zM24.68 31.41h2.24v2.24h-2.24zM53.84 31.41h2.24v2.24h-2.24zM60.57 31.41h6.73v2.24h-6.73zM69.54 31.41h2.24v2.24h-2.24zM76.27 31.41h2.24v2.24h-2.24zM80.76 31.41h2.24v2.24h-2.24zM0.00 33.65h2.24v2.24h-2.24zM4.49 33.65h2.24v2.24h-2.24zM8.97 33.65h4.49v2.24h-4.49zM17.95 33.65h2.24v2.24h-2.24zM22.43 33.65h4.49v2.24h-4.49zM56.08 33.65h6.73v2.24h-6.73zM69.54 33.65h2.24v2.24h-2.24zM0.00 35.89h11.22v2.24h-11.22zM13.46 35.89h4.49v2.24h-4.49zM20.19 35.89h4.49v2.24h-4.49zM53.84 35.89h11.22v2.24h-11.22zM67.30 35.89h2.24v2.24h-2.24zM76.27 35.89h2.24v2.24h-2.24zM80.76 35.89h2.24v2.24h-2.24zM2.24 38.14h2.24v2.24h-2.24zM8.97 38.14h4.49v2.24h-4.49zM15.70 38.14h8.97v2.24h-8.97zM26.92 38.14h2.24v2.24h-2.24zM56.08 38.14h4.49v2.24h-4.49zM62.81 38.14h4.49v2.24h-4.49zM74.03 38.14h6.73v2.24h-6.73zM0.00 40.38h2.24v2.24h-2.24zM4.49 40.38h24.68v2.24h-24.68zM56.08 40.38h4.49v2.24h-4.49zM62.81 40.38h2.24v2.24h-2.24zM67.30 40.38h2.24v2.24h-2.24zM76.27 40.38h4.49v2.24h-4.49zM0.00 42.62h8.97v2.24h-8.97zM15.70 42.62h13.46v2.24h-13.46zM67.30 42.62h2.24v2.24h-2.24zM80.76 42.62h2.24v2.24h-2.24zM2.24 44.86h13.46v2.24h-13.46zM17.95 44.86h4.49v2.24h-4.49zM26.92 44.86h2.24v2.24h-2.24zM60.57 44.86h2.24v2.24h-2.24zM65.05 44.86h2.24v2.24h-2.24zM69.54 44.86h2.24v2.24h-2.24zM76.27 44.86h4.49v2.24h-4.49zM0.00 47.11h6.73v2.24h-6.73zM20.19 47.11h2.24v2.24h-2.24zM24.68 47.11h4.49v2.24h-4.49zM56.08 47.11h6.73v2.24h-6.73zM71.78 47.11h4.49v2.24h-4.49zM78.51 47.11h4.49v2.24h-4.49zM0.00 49.35h4.49v2.24h-4.49zM8.97 49.35h2.24v2.24h-2.24zM13.46 49.35h4.49v2.24h-4.49zM26.92 49.35h2.24v2.24h-2.24zM53.84 49.35h2.24v2.24h-2.24zM71.78 49.35h2.24v2.24h-2.24zM80.76 49.35h2.24v2.24h-2.24zM0.00 51.59h6.73v2.24h-6.73zM15.70 51.59h2.24v2.24h-2.24zM20.19 51.59h2.24v2.24h-2.24zM24.68 51.59h2.24v2.24h-2.24zM58.32 51.59h8.97v2.24h-8.97zM76.27 51.59h4.49v2.24h-4.49zM4.49 53.84h2.24v2.24h-2.24zM8.97 53.84h8.97v2.24h-8.97zM22.43 53.84h2.24v2.24h-2.24zM29.16 53.84h4.49v2.24h-4.49zM42.62 53.84h4.49v2.24h-4.49zM51.59 53.84h4.49v2.24h-4.49zM60.57 53.84h6.73v2.24h-6.73zM71.78 53.84h4.49v2.24h-4.49zM2.24 56.08h4.49v2.24h-4.49zM11.22 56.08h2.24v2.24h-2.24zM22.43 56.08h2.24v2.24h-2.24zM29.16 56.08h13.46v2.24h-13.46zM44.86 56.08h2.24v2.24h-2.24zM67.30 56.08h13.46v2.24h-13.46zM2.24 58.32h4.49v2.24h-4.49zM8.97 58.32h6.73v2.24h-6.73zM17.95 58.32h2.24v2.24h-2.24zM22.43 58.32h2.24v2.24h-2.24zM29.16 58.32h2.24v2.24h-2.24zM35.89 58.32h8.97v2.24h-8.97zM49.35 58.32h6.73v2.24h-6.73zM62.81 58.32h4.49v2.24h-4.49zM71.78 58.32h6.73v2.24h-6.73zM80.76 58.32h2.24v2.24h-2.24zM0.00 60.57h6.73v2.24h-6.73zM11.22 60.57h2.24v2.24h-2.24zM17.95 60.57h4.49v2.24h-4.49zM24.68 60.57h2.24v2.24h-2.24zM29.16 60.57h11.22v2.24h-11.22zM42.62 60.57h4.49v2.24h-4.49zM49.35 60.57h8.97v2.24h-8.97zM65.05 60.57h4.49v2.24h-4.49zM71.78 60.57h2.24v2.24h-2.24zM0.00 62.81h4.49v2.24h-4.49zM6.73 62.81h2.24v2.24h-2.24zM13.46 62.81h2.24v2.24h-2.24zM17.95 62.81h2.24v2.24h-2.24zM26.92 62.81h2.24v2.24h-2.24zM31.41 62.81h2.24v2.24h-2.24zM38.14 62.81h11.22v2.24h-11.22zM51.59 62.81h22.43v2.24h-22.43zM78.51 62.81h4.49v2.24h-4.49zM24.68 65.05h4.49v2.24h-4.49zM33.65 65.05h8.97v2.24h-8.97zM44.86 65.05h2.24v2.24h-2.24zM49.35 65.05h2.24v2.24h-2.24zM58.32 65.05h6.73v2.24h-6.73zM71.78 65.05h2.24v2.24h-2.24zM76.27 65.05h6.73v2.24h-6.73zM0.00 67.30h15.70v2.24h-15.70zM22.43 67.30h2.24v2.24h-2.24zM26.92 67.30h2.24v2.24h-2.24zM33.65 67.30h4.49v2.24h-4.49zM40.38 67.30h2.24v2.24h-2.24zM44.86 67.30h2.24v2.24h-2.24zM53.84 67.30h2.24v2.24h-2.24zM58.32 67.30h6.73v2.24h-6.73zM67.30 67.30h2.24v2.24h-2.24zM71.78 67.30h11.22v2.24h-11.22zM0.00 69.54h2.24v2.24h-2.24zM13.46 69.54h2.24v2.24h-2.24zM22.43 69.54h2.24v2.24h-2.24zM35.89 69.54h4.49v2.24h-4.49zM42.62 69.54h4.49v2.24h-4.49zM51.59 69.54h2.24v2.24h-2.24zM56.08 69.54h2.24v2.24h-2.24zM62.81 69.54h2.24v2.24h-2.24zM71.78 69.54h8.97v2.24h-8.97zM0.00 71.78h2.24v2.24h-2.24zM4.49 71.78h6.73v2.24h-6.73zM13.46 71.78h2.24v2.24h-2.24zM17.95 71.78h13.46v2.24h-13.46zM33.65 71.78h4.49v2.24h-4.49zM42.62 71.78h2.24v2.24h-2.24zM49.35 71.78h2.24v2.24h-2.24zM53.84 71.78h4.49v2.24h-4.49zM60.57 71.78h13.46v2.24h-13.46zM76.27 71.78h6.73v2.24h-6.73zM0.00 74.03h2.24v2.24h-2.24zM4.49 74.03h6.73v2.24h-6.73zM13.46 74.03h2.24v2.24h-2.24zM22.43 74.03h4.49v2.24h-4.49zM29.16 74.03h2.24v2.24h-2.24zM33.65 74.03h2.24v2.24h-2.24zM38.14 74.03h2.24v2.24h-2.24zM47.11 74.03h2.24v2.24h-2.24zM51.59 74.03h4.49v2.24h-4.49zM58.32 74.03h6.73v2.24h-6.73zM71.78 74.03h2.24v2.24h-2.24zM78.51 74.03h2.24v2.24h-2.24zM0.00 76.27h2.24v2.24h-2.24zM4.49 76.27h6.73v2.24h-6.73zM13.46 76.27h2.24v2.24h-2.24zM17.95 76.27h6.73v2.24h-6.73zM31.41 76.27h8.97v2.24h-8.97zM42.62 76.27h11.22v2.24h-11.22zM58.32 76.27h6.73v2.24h-6.73zM67.30 76.27h2.24v2.24h-2.24zM74.03 76.27h6.73v2.24h-6.73zM0.00 78.51h2.24v2.24h-2.24zM13.46 78.51h2.24v2.24h-2.24zM24.68 78.51h2.24v2.24h-2.24zM31.41 78.51h8.97v2.24h-8.97zM42.62 78.51h2.24v2.24h-2.24zM51.59 78.51h2.24v2.24h-2.24zM56.08 78.51h4.49v2.24h-4.49zM67.30 78.51h2.24v2.24h-2.24zM71.78 78.51h2.24v2.24h-2.24zM78.51 78.51h4.49v2.24h-4.49zM0.00 80.76h15.70v2.24h-15.70zM17.95 80.76h6.73v2.24h-6.73zM26.92 80.76h2.24v2.24h-2.24zM31.41 80.76h6.73v2.24h-6.73zM47.11 80.76h8.97v2.24h-8.97zM58.32 80.76h4.49v2.24h-4.49zM69.54 80.76h4.49v2.24h-4.49zM76.27 80.76h2.24v2.24h-2.24zM80.76 80.76h2.24v2.24h-2.24z" fill="#4d4d4d"/>
<rect x="30.5" y="30" width="22.5" height="22.5" rx="1" fill="#f4524d"/>
<text x="32" y="40.5" style="font-size:9.5px;fill:#fff;font-weight:bold">以</text><text x="42" y="40.5" style="font-size:9.5px;fill:#fff;font-weight:bold">展</text>
<text x="32" y="50.5" style="font-size:9.5px;fill:#fff;font-weight:bold">图</text><text x="42" y="50.5" style="font-size:9.5px;fill:#fff;font-weight:bold">版</text>
</g>
<path d="M497 833 Q528 822 572 839 Q530 827 497 833Z" fill="#f2909c" stroke="#f2909c" stroke-width="0.8"/>
<text x="475.5" y="848.5" style="font-size:23px;font-weight:bold;fill:#f0808e;stroke:#f3a3ad;stroke-width:1.6px;paint-order:stroke" textLength="97" lengthAdjust="spacingAndGlyphs">6xiu.com</text>
<rect x="519" y="827" width="12" height="1.6" fill="#bbb"/>
</svg>
</body></html>
